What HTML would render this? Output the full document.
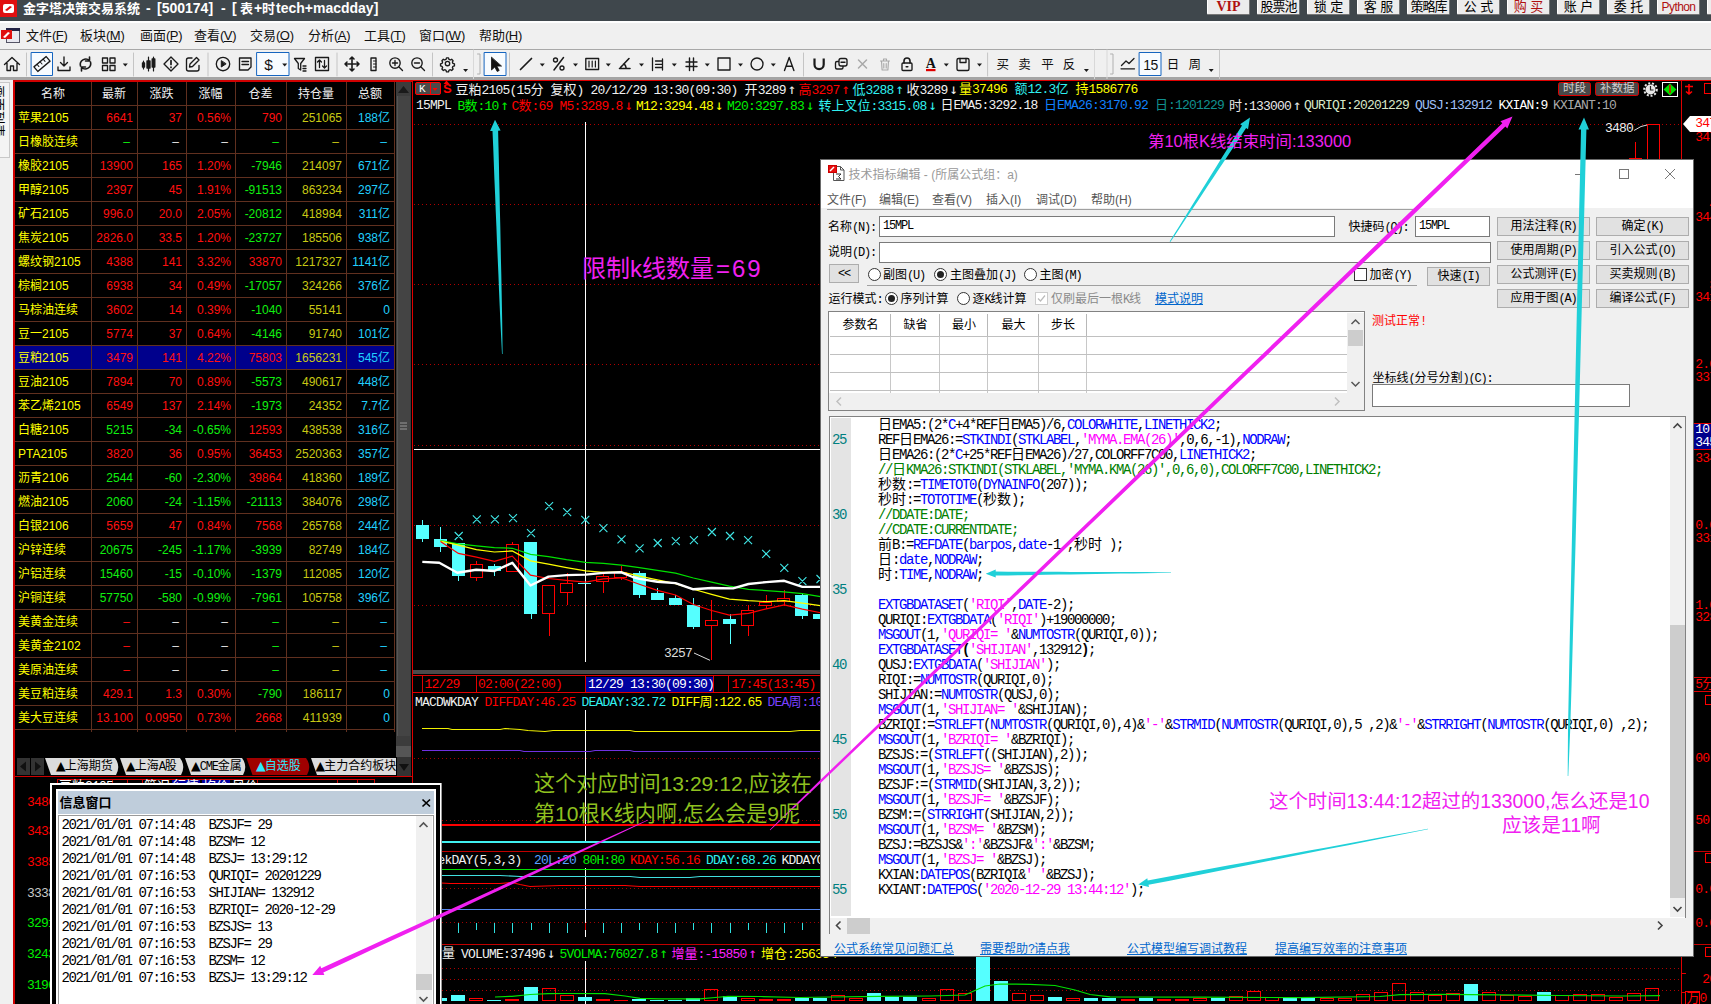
<!DOCTYPE html>
<html lang="zh-CN"><head><meta charset="utf-8"><title>金字塔决策交易系统</title>
<style>
*{margin:0;padding:0;box-sizing:border-box}
html,body{width:1711px;height:1004px;overflow:hidden;background:#000}
body{font-family:"Liberation Sans","Noto Sans CJK SC",sans-serif;font-size:12px;color:#000}
#root{position:relative;width:1711px;height:1004px;overflow:hidden;background:#000}
.a{position:absolute}
.m{font-family:"Liberation Mono","Noto Sans CJK SC",monospace;font-size:14px;letter-spacing:-1.4px;white-space:pre}
.m i,.s i{font-style:normal;letter-spacing:0}
.s{font-family:"Liberation Mono","Noto Sans CJK SC",monospace;font-size:12px;letter-spacing:-1.2px;white-space:pre}
.y{font-family:"Liberation Sans","Noto Sans CJK SC",sans-serif}
i{font-style:normal}
.h{font-family:"Liberation Mono","Noto Sans CJK SC",monospace;font-size:13px;letter-spacing:-.8px;white-space:pre;line-height:16px;height:16px}
.h i{letter-spacing:0}
.h .w{display:inline-block;width:12px;text-align:center;font-family:"DejaVu Sans Mono","DejaVu Sans",monospace;font-size:14px;line-height:14px}
#dlg{background:#f0f0f0;border:1px solid #6a6a6a;overflow:hidden}
.tt{font-family:"Liberation Mono","Noto Sans CJK SC",monospace;font-size:12px;letter-spacing:-1.2px;white-space:pre;line-height:18px}.tt i{letter-spacing:0}.tr{font-family:"DejaVu Sans",sans-serif;font-weight:normal;font-size:12.5px;letter-spacing:-1px;line-height:10px}
/* top */
#title{left:0;top:0;width:1711px;height:21px;background:#3f474c}
#title .t{left:23px;top:0;line-height:17px;color:#fff;font-weight:bold;font-size:13px;white-space:pre}
#title .l{font-size:14px}
.tb{top:0;height:15px;width:43px;background:#ececec;border:1px solid #fff;border-top:0;border-right-color:#777;border-bottom-color:#777;border-radius:0 0 2px 2px;text-align:center;line-height:14px;font-size:13px;white-space:pre;font-family:"Liberation Sans","Noto Sans CJK SC",sans-serif;color:#000;overflow:hidden}
#menu{left:0;top:21px;width:1711px;height:28px;background:#f0f0f0;border-top:2px solid #fff}
#menu span{position:absolute;top:-1px;line-height:28px;font-size:13px;color:#111;white-space:pre}
#menu u{letter-spacing:0}#menu b{font-weight:normal;letter-spacing:-.7px}
#tool{left:0;top:49px;width:1711px;height:31px;background:#f0f0f0;border-top:1px solid #a8a8a8;border-bottom:3px solid #a4a4a4}
/* table */
#tbl{left:13px;top:80px;width:400px;height:925px;background:#000}
.r{position:absolute;left:2px;width:380px;height:24px;border-bottom:1px solid #60301f;line-height:25px;font-size:12px}
.r span{position:absolute;top:0;height:23px;text-align:right;white-space:pre}
.r .n{left:3px;text-align:left;color:#ff0}
.R{color:#ff1010}.G{color:#10f010}.W{color:#e8e8e8}.Y{color:#c8c814}.C{color:#20d0ff}
.vl{position:absolute;top:2px;width:1px;height:650px;background:#60301f}
</style></head><body><div id="root">
<div class="a" id="title"><svg class="a" style="left:0;top:0" width="17" height="17"><rect width="17" height="17" fill="#e01010"/><rect x="3" y="4" width="11" height="9" rx="2" fill="#fff"/><path d="M5 10l5-4 2 1-5 4z" fill="#e01010"/></svg><div class="a t">金字塔决策交易系统</div><div class="a t l" style="left:146px">-</div><div class="a t l" style="left:157px">[500174]</div><div class="a t l" style="left:221px">-</div><div class="a t l" style="left:232px">[</div><div class="a t" style="left:240px">表</div><div class="a t l" style="left:254px">+</div><div class="a t" style="left:262px">时</div><div class="a t l" style="left:276px">tech+macdday]</div>
<div class="a tb" style="left:1207px;color:#b01010;font-weight:bold;font-size:14px;font-family:Liberation Serif,serif">VIP</div>
<div class="a tb" style="left:1257px;color:#000;letter-spacing:-1px">股票池</div>
<div class="a tb" style="left:1307px;color:#000;">锁 定</div>
<div class="a tb" style="left:1357px;color:#000;">客 服</div>
<div class="a tb" style="left:1407px;color:#000;letter-spacing:-1px">策略库</div>
<div class="a tb" style="left:1457px;color:#000;">公 式</div>
<div class="a tb" style="left:1507px;color:#b01010;">购 买</div>
<div class="a tb" style="left:1557px;color:#000;">账 户</div>
<div class="a tb" style="left:1607px;color:#000;">委 托</div>
<div class="a tb" style="left:1657px;color:#b01010;font-family:Liberation Sans,sans-serif;letter-spacing:-.6px;font-size:12px">Python</div>
<div class="a tb" style="left:1707px;color:#000;"></div>
</div>
<div class="a" id="menu">
<svg class="a" style="left:1px;top:4px" width="19" height="17"><rect x="5.5" y="1.5" width="13" height="14" fill="#e8e8f0" stroke="#556"/><rect x="5" y="1" width="14" height="3" fill="#224"/><rect x="0" y="3" width="11" height="9" fill="#e01010"/><path d="M2 10l5-5 2 1-5 5z" fill="#fff"/></svg>
<span style="left:26px">文件<b>(<u>F</u>)</b></span>
<span style="left:80px">板块<b>(<u>M</u>)</b></span>
<span style="left:140px">画面<b>(<u>P</u>)</b></span>
<span style="left:194px">查看<b>(<u>V</u>)</b></span>
<span style="left:250px">交易<b>(<u>O</u>)</b></span>
<span style="left:308px">分析<b>(<u>A</u>)</b></span>
<span style="left:364px">工具<b>(<u>T</u>)</b></span>
<span style="left:419px">窗口<b>(<u>W</u>)</b></span>
<span style="left:479px">帮助<b>(<u>H</u>)</b></span>
</div>
<div class="a" id="tool"><svg class="a" style="left:0;top:-1px" width="1711" height="30" viewBox="0 0 1711 30" fill="none" stroke="#1a1a1a" stroke-width="1.35" stroke-linecap="round" stroke-linejoin="round"><path d="M4.5 15.5L12 8.5l7.5 7M7 14v7.5h3.5v-4.5h3v4.5H17V14"/><path d="M26.5 4v23" stroke="#c4c4c4" stroke-width="1"/><rect x="31.5" y="3.5" width="21.0" height="23" fill="#f7fbff" stroke="#1565c0" stroke-width="1"/><g transform="rotate(-40 42 15)"><rect x="34" y="12" width="16" height="6"/><path d="M38 12v3M42 12v3M46 12v3" stroke-width="1"/></g><path d="M64 8v9M60.5 13.5L64 17l3.5-3.5M58 18v3.5h12V18"/><path d="M80.5 17a5.5 5.5 0 0 1 9-5.5M90.5 13a5.5 5.5 0 0 1-9 5.5M89.5 8v4h-4M81.500 22v-4h4" stroke-width="1.6"/><rect x="102.5" y="9.0" width="5" height="5"/><rect x="102.5" y="16.5" width="5" height="5"/><rect x="110.0" y="9.0" width="5" height="5"/><rect x="110.0" y="16.5" width="5" height="5"/><path d="M122.8 14.5h5l-2.5 3z" fill="#1a1a1a" stroke="none"/><path d="M133.5 4v23" stroke="#c4c4c4" stroke-width="1"/><path d="M143.5 12v8M148.5 8v14M153.5 8v14" stroke-width="1.2"/><rect x="142.500" y="14" width="2" height="4" fill="#1a1a1a"/><rect x="147" y="12" width="3" height="7" fill="#1a1a1a"/><rect x="152.2" y="10" width="2.600" height="8" fill="#1a1a1a"/><path d="M171 8l7 7-7 7-7-7z"/><path d="M171 11.500v4M171 18v.4" stroke-width="1.7"/><path d="M192 9h-3.500a2 2 0 0 0-2 2v9a2 2 0 0 0 2 2h8.500a2 2 0 0 0 2-2v-3.500"/><path d="M196.500 8.500l2.500 2.500-6.500 6.500-3 .5.500-3z"/><path d="M208.0 4v23" stroke="#c4c4c4" stroke-width="1"/><circle cx="223" cy="15" r="6.7"/><path d="M221.300 12v6l4.500-3z" fill="#1a1a1a" stroke-width="1"/><path d="M239.500 9h11.500v9l-3 3h-8.500zM242 12.500h6.500M242 15.500h6.500"/><rect x="257.0" y="3.5" width="32.0" height="23" fill="#f7fbff" stroke="#1565c0" stroke-width="1"/><text x="268.500" y="21" font-family="Liberation Sans,sans-serif" font-size="15.5" fill="#111" stroke="none" text-anchor="middle">$</text><path d="M282.2 14.5h5l-2.5 3z" fill="#1a1a1a" stroke="none"/><path d="M294.500 9.500h10l-3.800 5v6.500l-2.400-1.500v-5zM303 17h3M303 19.500h3M303 22h3" stroke-width="1.300"/><rect x="315.500" y="8.500" width="13" height="13"/><path d="M319.500 18.500v-7M317.500 13l2-2 2 2M324.500 11.500v7M322.500 17l2 2 2-2" stroke-width="1.300"/><path d="M337.0 4v23" stroke="#c4c4c4" stroke-width="1"/><path d="M352 8v14M345 15h14M350 10l2-2 2 2M350 20l2 2 2-2M347 13l-2 2 2 2M357 13l2 2-2 2" stroke-width="1.600"/><rect x="371" y="9" width="5" height="12.500"/><path d="M373.500 12h2.500M373.500 15h2.500M373.500 18h2.500" stroke-width="1"/><circle cx="395" cy="14" r="5.200"/><path d="M399 18l3.500 3.500M392.500 14h5M395 11.500v5"/><circle cx="417" cy="14" r="5.200"/><path d="M421 18l3.500 3.500M414.500 14h5"/><path d="M432.5 4v23" stroke="#c4c4c4" stroke-width="1"/><circle cx="447.500" cy="14.500" r="2.200"/><path d="M446.200 8h2.600l.5 1.800 1.700.8 1.700-.9 1.800 1.800-.9 1.700.7 1.700 1.900.5v2.600l-1.900.5-.7 1.700.9 1.700-1.800 1.800-1.700-.9-1.700.7-.5 1.900h-2.600l-.5-1.900-1.700-.7-1.700.9-1.800-1.800.9-1.700-.8-1.700-1.800-.5v-2.600l1.800-.5.8-1.700-.9-1.700 1.800-1.800 1.700.9 1.700-.8z" transform="translate(447.500 14.500) scale(.8) translate(-447.500 -15)" stroke-width="1.700"/><path d="M463.1 20.0h5l-2.5 3z" fill="#1a1a1a" stroke="none"/><path d="M473.500 1v29" stroke="#d8d8d8" stroke-width="1"/><path d="M477.500 5h2.500v20h-2.500" stroke="#b0b0b0" stroke-width="1" /><rect x="484.5" y="3.5" width="21.5" height="23" fill="#f7fbff" stroke="#1565c0" stroke-width="1"/><path d="M491.500 8.500v12.500l3.300-3 2.400 4.500 2-1-2.300-4.400h4.300z" fill="#111" stroke="#111" stroke-width=".8"/><path d="M509.5 4v23" stroke="#c4c4c4" stroke-width="1"/><path d="M520.500 20.500l11-11" stroke-width="1.700"/><path d="M539.8 14.5h5l-2.5 3z" fill="#1a1a1a" stroke="none"/><path d="M554 21l9.500-12.500" stroke-width="1.500"/><circle cx="555.500" cy="11" r="2"/><circle cx="562" cy="19" r="2"/><path d="M573.0 14.5h5l-2.5 3z" fill="#1a1a1a" stroke="none"/><rect x="585.800" y="9.500" width="12.800" height="11"/><path d="M589 12v6M592.200 12v6M595.400 12v6" stroke-width="1.200"/><path d="M605.8 14.5h5l-2.5 3z" fill="#1a1a1a" stroke="none"/><path d="M619.500 19.500h10.500M620.500 18.500l8.500-9M623.500 15a4 4 0 0 1 2.500 3.500" stroke-width="1.600"/><path d="M639.0 14.5h5l-2.5 3z" fill="#1a1a1a" stroke="none"/><path d="M652.500 9v12.500M655.500 12h7M655.500 15.300h7M655.500 18.500h7M662.500 10v11" stroke-width="1.300"/><path d="M671.8 14.5h5l-2.5 3z" fill="#1a1a1a" stroke="none"/><path d="M689.500 9v12.500M693.500 9v12.500M686 13h11M686 17.500h11" stroke-width="1.400"/><path d="M704.8 14.5h5l-2.5 3z" fill="#1a1a1a" stroke="none"/><rect x="718" y="9" width="12" height="12"/><path d="M738.0 14.5h5l-2.5 3z" fill="#1a1a1a" stroke="none"/><circle cx="757" cy="15" r="6"/><path d="M770.8 14.5h5l-2.5 3z" fill="#1a1a1a" stroke="none"/><path d="M784.500 21.500l4.700-13 4.700 13M786.200 17.300h6" stroke-width="1.400"/><path d="M803.5 4v23" stroke="#c4c4c4" stroke-width="1"/><path d="M814.500 9.500v6a4.600 4.600 0 0 0 9.200 0v-6" stroke-width="2.200" stroke-linecap="butt"/><rect x="835.500" y="12.500" width="7.500" height="7.500" rx="1.500"/><rect x="839" y="9.500" width="8" height="7.500" rx="2" fill="#f0f0f0"/><path d="M841 13.200h4"/><path d="M858.500 11l8 8M866.500 11l-8 8" stroke="#a8a8a8" stroke-width="1.500"/><path d="M880.500 12h9M883.500 12v-2h3v2M881.500 12l.6 9h5.800l.6-9M883.800 14.500v4.500M886.200 14.500v4.500" stroke="#a8a8a8" stroke-width="1.100"/><rect x="902" y="14" width="10" height="7.500" rx="1"/><path d="M904 14v-2a3 3 0 0 1 6 0v2M906.200 17.800h1.600" stroke-width="1.600"/><text x="930.700" y="19" font-family="Liberation Serif,serif" font-weight="bold" font-size="14" fill="#111" stroke="none" text-anchor="middle">A</text><rect x="926" y="20" width="9.500" height="2.200" fill="#e00000" stroke="none"/><path d="M943.8 14.5h5l-2.5 3z" fill="#1a1a1a" stroke="none"/><rect x="957" y="9.500" width="12" height="12" rx="1.500"/><path d="M960 9.500v4h6v-4"/><path d="M977.0 14.5h5l-2.5 3z" fill="#1a1a1a" stroke="none"/><path d="M987.6 4v23" stroke="#c4c4c4" stroke-width="1"/><text x="1002.7" y="19.500" font-family="Liberation Sans,Noto Sans CJK SC,sans-serif" font-size="12.500" fill="#111" stroke="none" text-anchor="middle">买</text><text x="1024.5" y="19.500" font-family="Liberation Sans,Noto Sans CJK SC,sans-serif" font-size="12.500" fill="#111" stroke="none" text-anchor="middle">卖</text><text x="1047.4" y="19.500" font-family="Liberation Sans,Noto Sans CJK SC,sans-serif" font-size="12.500" fill="#111" stroke="none" text-anchor="middle">平</text><text x="1069.0" y="19.500" font-family="Liberation Sans,Noto Sans CJK SC,sans-serif" font-size="12.500" fill="#111" stroke="none" text-anchor="middle">反</text><path d="M1083.9 20.0h5l-2.5 3z" fill="#1a1a1a" stroke="none"/><path d="M1094.500 1v29M1107 1v29" stroke="#d8d8d8" stroke-width="1"/><path d="M1110.500 5h2.500v20h-2.500" stroke="#b0b0b0" stroke-width="1"/><path d="M1121 19.800h13.500M1121.500 16.500l4.500-4.500 3 2.500 5-5" stroke-width="1.300"/><rect x="1139.5" y="3.5" width="21.5" height="23" fill="#f7fbff" stroke="#1565c0" stroke-width="1"/><text x="1150.500" y="20.500" font-family="Liberation Sans,sans-serif" font-size="14" fill="#111" stroke="none" text-anchor="middle" letter-spacing="-.5">15</text><text x="1173.0" y="19.500" font-family="Liberation Sans,Noto Sans CJK SC,sans-serif" font-size="12.500" fill="#111" stroke="none" text-anchor="middle">日</text><text x="1194.7" y="19.500" font-family="Liberation Sans,Noto Sans CJK SC,sans-serif" font-size="12.500" fill="#111" stroke="none" text-anchor="middle">周</text><path d="M1208.7 20.0h5l-2.5 3z" fill="#1a1a1a" stroke="none"/><path d="M1219.500 1v29" stroke="#c8c8c8" stroke-width="1"/></svg></div>
<div class="a" style="left:0;top:80px;width:14px;height:924px;background:#f0f0f0"></div>
<div class="a" style="left:0;top:82px;width:10px;height:76px;background:#f4f4f4;border:1px solid #c8c8c8;border-left:0;overflow:hidden"><div class="a" style="left:-9px;top:2px;width:14px;font-size:13px;line-height:13px;color:#000;transform:rotate(90deg);transform-origin:7px 7px;white-space:pre;">画面列表</div></div>
<div class="a" id="tbl">
<div class="a" style="left:0;top:0;width:400px;height:2px;background:#d00000"></div>
<div class="a" style="left:0;top:0;width:2px;height:925px;background:#d00000"></div>
<div class="r" style="top:2px;color:#f0f0f0">
<span style="left:0px;width:76px;text-align:center;font-size:12px">名称</span>
<span style="left:76px;width:46px;text-align:center;font-size:12px">最新</span>
<span style="left:122px;width:49px;text-align:center;font-size:12px">涨跌</span>
<span style="left:171px;width:49px;text-align:center;font-size:12px">涨幅</span>
<span style="left:220px;width:51px;text-align:center;font-size:12px">仓差</span>
<span style="left:271px;width:60px;text-align:center;font-size:12px">持仓量</span>
<span style="left:331px;width:48px;text-align:center;font-size:12px">总额</span>
</div>
<div class="r" style="top:26px;">
<span class="n">苹果2105</span>
<span class="R" style="left:76px;width:46px;padding-right:4px">6641</span>
<span class="R" style="left:122px;width:49px;padding-right:4px">37</span>
<span class="R" style="left:171px;width:49px;padding-right:4px">0.56%</span>
<span class="R" style="left:220px;width:51px;padding-right:4px">790</span>
<span class="Y" style="left:271px;width:60px;padding-right:4px">251065</span>
<span class="C" style="left:331px;width:48px;padding-right:4px">188亿</span>
</div>
<div class="r" style="top:50px;">
<span class="n">日橡胶连续</span>
<span class="G" style="left:76px;width:46px;padding-right:7px">–</span>
<span class="W" style="left:122px;width:49px;padding-right:7px">–</span>
<span class="W" style="left:171px;width:49px;padding-right:7px">–</span>
<span class="G" style="left:220px;width:51px;padding-right:7px">–</span>
<span class="Y" style="left:271px;width:60px;padding-right:7px">–</span>
<span class="C" style="left:331px;width:48px;padding-right:7px">–</span>
</div>
<div class="r" style="top:74px;">
<span class="n">橡胶2105</span>
<span class="R" style="left:76px;width:46px;padding-right:4px">13900</span>
<span class="R" style="left:122px;width:49px;padding-right:4px">165</span>
<span class="R" style="left:171px;width:49px;padding-right:4px">1.20%</span>
<span class="G" style="left:220px;width:51px;padding-right:4px">-7946</span>
<span class="Y" style="left:271px;width:60px;padding-right:4px">214097</span>
<span class="C" style="left:331px;width:48px;padding-right:4px">671亿</span>
</div>
<div class="r" style="top:98px;">
<span class="n">甲醇2105</span>
<span class="R" style="left:76px;width:46px;padding-right:4px">2397</span>
<span class="R" style="left:122px;width:49px;padding-right:4px">45</span>
<span class="R" style="left:171px;width:49px;padding-right:4px">1.91%</span>
<span class="G" style="left:220px;width:51px;padding-right:4px">-91513</span>
<span class="Y" style="left:271px;width:60px;padding-right:4px">863234</span>
<span class="C" style="left:331px;width:48px;padding-right:4px">297亿</span>
</div>
<div class="r" style="top:122px;">
<span class="n">矿石2105</span>
<span class="R" style="left:76px;width:46px;padding-right:4px">996.0</span>
<span class="R" style="left:122px;width:49px;padding-right:4px">20.0</span>
<span class="R" style="left:171px;width:49px;padding-right:4px">2.05%</span>
<span class="G" style="left:220px;width:51px;padding-right:4px">-20812</span>
<span class="Y" style="left:271px;width:60px;padding-right:4px">418984</span>
<span class="C" style="left:331px;width:48px;padding-right:4px">311亿</span>
</div>
<div class="r" style="top:146px;">
<span class="n">焦炭2105</span>
<span class="R" style="left:76px;width:46px;padding-right:4px">2826.0</span>
<span class="R" style="left:122px;width:49px;padding-right:4px">33.5</span>
<span class="R" style="left:171px;width:49px;padding-right:4px">1.20%</span>
<span class="G" style="left:220px;width:51px;padding-right:4px">-23727</span>
<span class="Y" style="left:271px;width:60px;padding-right:4px">185506</span>
<span class="C" style="left:331px;width:48px;padding-right:4px">938亿</span>
</div>
<div class="r" style="top:170px;">
<span class="n">螺纹钢2105</span>
<span class="R" style="left:76px;width:46px;padding-right:4px">4388</span>
<span class="R" style="left:122px;width:49px;padding-right:4px">141</span>
<span class="R" style="left:171px;width:49px;padding-right:4px">3.32%</span>
<span class="R" style="left:220px;width:51px;padding-right:4px">33870</span>
<span class="Y" style="left:271px;width:60px;padding-right:4px">1217327</span>
<span class="C" style="left:331px;width:48px;padding-right:4px">1141亿</span>
</div>
<div class="r" style="top:194px;">
<span class="n">棕榈2105</span>
<span class="R" style="left:76px;width:46px;padding-right:4px">6938</span>
<span class="R" style="left:122px;width:49px;padding-right:4px">34</span>
<span class="R" style="left:171px;width:49px;padding-right:4px">0.49%</span>
<span class="G" style="left:220px;width:51px;padding-right:4px">-17057</span>
<span class="Y" style="left:271px;width:60px;padding-right:4px">324266</span>
<span class="C" style="left:331px;width:48px;padding-right:4px">376亿</span>
</div>
<div class="r" style="top:218px;">
<span class="n">马棕油连续</span>
<span class="R" style="left:76px;width:46px;padding-right:4px">3602</span>
<span class="R" style="left:122px;width:49px;padding-right:4px">14</span>
<span class="R" style="left:171px;width:49px;padding-right:4px">0.39%</span>
<span class="G" style="left:220px;width:51px;padding-right:4px">-1040</span>
<span class="Y" style="left:271px;width:60px;padding-right:4px">55141</span>
<span class="C" style="left:331px;width:48px;padding-right:4px">0</span>
</div>
<div class="r" style="top:242px;">
<span class="n">豆一2105</span>
<span class="R" style="left:76px;width:46px;padding-right:4px">5774</span>
<span class="R" style="left:122px;width:49px;padding-right:4px">37</span>
<span class="R" style="left:171px;width:49px;padding-right:4px">0.64%</span>
<span class="G" style="left:220px;width:51px;padding-right:4px">-4146</span>
<span class="Y" style="left:271px;width:60px;padding-right:4px">91740</span>
<span class="C" style="left:331px;width:48px;padding-right:4px">101亿</span>
</div>
<div class="r" style="top:266px; background:#00008c;">
<span class="n">豆粕2105</span>
<span class="R" style="left:76px;width:46px;padding-right:4px">3479</span>
<span class="R" style="left:122px;width:49px;padding-right:4px">141</span>
<span class="R" style="left:171px;width:49px;padding-right:4px">4.22%</span>
<span class="R" style="left:220px;width:51px;padding-right:4px">75803</span>
<span class="Y" style="left:271px;width:60px;padding-right:4px">1656231</span>
<span class="C" style="left:331px;width:48px;padding-right:4px">545亿</span>
</div>
<div class="r" style="top:290px;">
<span class="n">豆油2105</span>
<span class="R" style="left:76px;width:46px;padding-right:4px">7894</span>
<span class="R" style="left:122px;width:49px;padding-right:4px">70</span>
<span class="R" style="left:171px;width:49px;padding-right:4px">0.89%</span>
<span class="G" style="left:220px;width:51px;padding-right:4px">-5573</span>
<span class="Y" style="left:271px;width:60px;padding-right:4px">490617</span>
<span class="C" style="left:331px;width:48px;padding-right:4px">448亿</span>
</div>
<div class="r" style="top:314px;">
<span class="n">苯乙烯2105</span>
<span class="R" style="left:76px;width:46px;padding-right:4px">6549</span>
<span class="R" style="left:122px;width:49px;padding-right:4px">137</span>
<span class="R" style="left:171px;width:49px;padding-right:4px">2.14%</span>
<span class="G" style="left:220px;width:51px;padding-right:4px">-1973</span>
<span class="Y" style="left:271px;width:60px;padding-right:4px">24352</span>
<span class="C" style="left:331px;width:48px;padding-right:4px">7.7亿</span>
</div>
<div class="r" style="top:338px;">
<span class="n">白糖2105</span>
<span class="G" style="left:76px;width:46px;padding-right:4px">5215</span>
<span class="G" style="left:122px;width:49px;padding-right:4px">-34</span>
<span class="G" style="left:171px;width:49px;padding-right:4px">-0.65%</span>
<span class="R" style="left:220px;width:51px;padding-right:4px">12593</span>
<span class="Y" style="left:271px;width:60px;padding-right:4px">438538</span>
<span class="C" style="left:331px;width:48px;padding-right:4px">316亿</span>
</div>
<div class="r" style="top:362px;">
<span class="n">PTA2105</span>
<span class="R" style="left:76px;width:46px;padding-right:4px">3820</span>
<span class="R" style="left:122px;width:49px;padding-right:4px">36</span>
<span class="R" style="left:171px;width:49px;padding-right:4px">0.95%</span>
<span class="R" style="left:220px;width:51px;padding-right:4px">36453</span>
<span class="Y" style="left:271px;width:60px;padding-right:4px">2520363</span>
<span class="C" style="left:331px;width:48px;padding-right:4px">357亿</span>
</div>
<div class="r" style="top:386px;">
<span class="n">沥青2106</span>
<span class="G" style="left:76px;width:46px;padding-right:4px">2544</span>
<span class="G" style="left:122px;width:49px;padding-right:4px">-60</span>
<span class="G" style="left:171px;width:49px;padding-right:4px">-2.30%</span>
<span class="R" style="left:220px;width:51px;padding-right:4px">39864</span>
<span class="Y" style="left:271px;width:60px;padding-right:4px">418360</span>
<span class="C" style="left:331px;width:48px;padding-right:4px">189亿</span>
</div>
<div class="r" style="top:410px;">
<span class="n">燃油2105</span>
<span class="G" style="left:76px;width:46px;padding-right:4px">2060</span>
<span class="G" style="left:122px;width:49px;padding-right:4px">-24</span>
<span class="G" style="left:171px;width:49px;padding-right:4px">-1.15%</span>
<span class="G" style="left:220px;width:51px;padding-right:4px">-21113</span>
<span class="Y" style="left:271px;width:60px;padding-right:4px">384076</span>
<span class="C" style="left:331px;width:48px;padding-right:4px">298亿</span>
</div>
<div class="r" style="top:434px;">
<span class="n">白银2106</span>
<span class="R" style="left:76px;width:46px;padding-right:4px">5659</span>
<span class="R" style="left:122px;width:49px;padding-right:4px">47</span>
<span class="R" style="left:171px;width:49px;padding-right:4px">0.84%</span>
<span class="R" style="left:220px;width:51px;padding-right:4px">7568</span>
<span class="Y" style="left:271px;width:60px;padding-right:4px">265768</span>
<span class="C" style="left:331px;width:48px;padding-right:4px">244亿</span>
</div>
<div class="r" style="top:458px;">
<span class="n">沪锌连续</span>
<span class="G" style="left:76px;width:46px;padding-right:4px">20675</span>
<span class="G" style="left:122px;width:49px;padding-right:4px">-245</span>
<span class="G" style="left:171px;width:49px;padding-right:4px">-1.17%</span>
<span class="G" style="left:220px;width:51px;padding-right:4px">-3939</span>
<span class="Y" style="left:271px;width:60px;padding-right:4px">82749</span>
<span class="C" style="left:331px;width:48px;padding-right:4px">184亿</span>
</div>
<div class="r" style="top:482px;">
<span class="n">沪铝连续</span>
<span class="G" style="left:76px;width:46px;padding-right:4px">15460</span>
<span class="G" style="left:122px;width:49px;padding-right:4px">-15</span>
<span class="G" style="left:171px;width:49px;padding-right:4px">-0.10%</span>
<span class="G" style="left:220px;width:51px;padding-right:4px">-1379</span>
<span class="Y" style="left:271px;width:60px;padding-right:4px">112085</span>
<span class="C" style="left:331px;width:48px;padding-right:4px">120亿</span>
</div>
<div class="r" style="top:506px;">
<span class="n">沪铜连续</span>
<span class="G" style="left:76px;width:46px;padding-right:4px">57750</span>
<span class="G" style="left:122px;width:49px;padding-right:4px">-580</span>
<span class="G" style="left:171px;width:49px;padding-right:4px">-0.99%</span>
<span class="G" style="left:220px;width:51px;padding-right:4px">-7961</span>
<span class="Y" style="left:271px;width:60px;padding-right:4px">105758</span>
<span class="C" style="left:331px;width:48px;padding-right:4px">396亿</span>
</div>
<div class="r" style="top:530px;">
<span class="n">美黄金连续</span>
<span class="R" style="left:76px;width:46px;padding-right:7px">–</span>
<span class="W" style="left:122px;width:49px;padding-right:7px">–</span>
<span class="W" style="left:171px;width:49px;padding-right:7px">–</span>
<span class="G" style="left:220px;width:51px;padding-right:7px">–</span>
<span class="Y" style="left:271px;width:60px;padding-right:7px">–</span>
<span class="C" style="left:331px;width:48px;padding-right:7px">–</span>
</div>
<div class="r" style="top:554px;">
<span class="n">美黄金2102</span>
<span class="R" style="left:76px;width:46px;padding-right:7px">–</span>
<span class="W" style="left:122px;width:49px;padding-right:7px">–</span>
<span class="W" style="left:171px;width:49px;padding-right:7px">–</span>
<span class="G" style="left:220px;width:51px;padding-right:7px">–</span>
<span class="Y" style="left:271px;width:60px;padding-right:7px">–</span>
<span class="C" style="left:331px;width:48px;padding-right:7px">–</span>
</div>
<div class="r" style="top:578px;">
<span class="n">美原油连续</span>
<span class="R" style="left:76px;width:46px;padding-right:7px">–</span>
<span class="W" style="left:122px;width:49px;padding-right:7px">–</span>
<span class="W" style="left:171px;width:49px;padding-right:7px">–</span>
<span class="G" style="left:220px;width:51px;padding-right:7px">–</span>
<span class="Y" style="left:271px;width:60px;padding-right:7px">–</span>
<span class="C" style="left:331px;width:48px;padding-right:7px">–</span>
</div>
<div class="r" style="top:602px;">
<span class="n">美豆粕连续</span>
<span class="R" style="left:76px;width:46px;padding-right:4px">429.1</span>
<span class="R" style="left:122px;width:49px;padding-right:4px">1.3</span>
<span class="R" style="left:171px;width:49px;padding-right:4px">0.30%</span>
<span class="G" style="left:220px;width:51px;padding-right:4px">-790</span>
<span class="Y" style="left:271px;width:60px;padding-right:4px">186117</span>
<span class="C" style="left:331px;width:48px;padding-right:4px">0</span>
</div>
<div class="r" style="top:626px;">
<span class="n">美大豆连续</span>
<span class="R" style="left:76px;width:46px;padding-right:4px">13.100</span>
<span class="R" style="left:122px;width:49px;padding-right:4px">0.0950</span>
<span class="R" style="left:171px;width:49px;padding-right:4px">0.73%</span>
<span class="R" style="left:220px;width:51px;padding-right:4px">2668</span>
<span class="Y" style="left:271px;width:60px;padding-right:4px">411939</span>
<span class="C" style="left:331px;width:48px;padding-right:4px">0</span>
</div>
<div class="vl" style="left:78px"></div>
<div class="vl" style="left:124px"></div>
<div class="vl" style="left:173px"></div>
<div class="vl" style="left:222px"></div>
<div class="vl" style="left:273px"></div>
<div class="vl" style="left:333px"></div>
<div class="vl" style="left:381px"></div>
</div>
<svg class="a" style="left:0;top:0" width="1711" height="1004" viewBox="0 0 1711 1004">
<g shape-rendering="crispEdges">
<rect x="412" y="80" width="1" height="924" fill="#e00000"/><rect x="413" y="80" width="1298" height="1" fill="#e00000"/>
<rect x="1681" y="80" width="1" height="924" fill="#e00000"/>
<path d="M414 124.5H1681" stroke="#b00000" stroke-dasharray="1 3"/>
<path d="M414 204.5H1681" stroke="#b00000" stroke-dasharray="1 3"/>
<path d="M414 284.5H1681" stroke="#b00000" stroke-dasharray="1 3"/>
<path d="M414 364.5H1681" stroke="#b00000" stroke-dasharray="1 3"/>
<path d="M414 445.5H1681" stroke="#b00000" stroke-dasharray="1 3"/>
<path d="M414 525.5H1681" stroke="#b00000" stroke-dasharray="1 3"/>
<path d="M414 605.5H1681" stroke="#b00000" stroke-dasharray="1 3"/>
<path d="M414 758.5H1681" stroke="#a00000" stroke-dasharray="1 3"/>
<path d="M414 820.5H1681" stroke="#a00000" stroke-dasharray="1 3"/>
<path d="M414 888.5H1681" stroke="#a00000" stroke-dasharray="1 3"/>
<path d="M414 922.5H1681" stroke="#a00000" stroke-dasharray="1 3"/>
<path d="M414 968.5H1681" stroke="#b00000" stroke-dasharray="1 3"/>
<path d="M414 979.5H1681" stroke="#b00000" stroke-dasharray="1 3"/>
<path d="M414 990.5H1681" stroke="#b00000" stroke-dasharray="1 3"/>
<rect x="585" y="122" width="1" height="540" fill="#fff"/><rect x="414" y="449" width="1267" height="1" fill="#fff"/>
<rect x="585" y="710" width="1" height="133" fill="#fff"/><rect x="585" y="868" width="1" height="69" fill="#fff"/><rect x="585" y="961" width="1" height="43" fill="#fff"/>
<rect x="413" y="670" width="1268" height="4" fill="#4a4a4a"/>
<rect x="413" y="675" width="1268" height="1" fill="#e00000"/><rect x="413" y="692" width="1268" height="1" fill="#e00000"/>
<rect x="422" y="676" width="1" height="16" fill="#e00000"/>
<rect x="476" y="676" width="1" height="16" fill="#e00000"/>
<rect x="585" y="676" width="1" height="16" fill="#e00000"/>
<rect x="713" y="676" width="1" height="16" fill="#e00000"/>
<rect x="728" y="676" width="1" height="16" fill="#e00000"/>
<rect x="586" y="677" width="127" height="15" fill="#0000a0"/>
<rect x="413" y="851" width="1268" height="1" fill="#c00000"/><rect x="413" y="944" width="1268" height="1" fill="#c00000"/>
<rect x="414" y="824" width="1267" height="2" fill="#ff0000"/><rect x="414" y="841" width="1267" height="2" fill="#40f0f0"/>
<rect x="414" y="869" width="1267" height="1" fill="#00e000"/><rect x="414" y="909" width="1267" height="1" fill="#5588ee"/>
<rect x="422" y="923" width="1" height="7" fill="#30e0e0"/>
<rect x="440" y="923" width="1" height="10" fill="#30e0e0"/>
<rect x="458" y="923" width="1" height="10" fill="#30e0e0"/>
<rect x="476" y="923" width="1" height="7" fill="#30e0e0"/>
<rect x="494" y="923" width="1" height="10" fill="#30e0e0"/>
<rect x="512" y="923" width="1" height="10" fill="#30e0e0"/>
<rect x="531" y="923" width="1" height="7" fill="#30e0e0"/>
<rect x="549" y="923" width="1" height="10" fill="#30e0e0"/>
<rect x="567" y="923" width="1" height="10" fill="#30e0e0"/>
<rect x="585" y="923" width="1" height="7" fill="#d00000"/>
<rect x="603" y="923" width="1" height="10" fill="#30e0e0"/>
<rect x="621" y="923" width="1" height="10" fill="#30e0e0"/>
<rect x="639" y="923" width="1" height="7" fill="#30e0e0"/>
<rect x="657" y="923" width="1" height="10" fill="#30e0e0"/>
<rect x="675" y="923" width="1" height="10" fill="#30e0e0"/>
<rect x="693" y="923" width="1" height="7" fill="#30e0e0"/>
<rect x="711" y="923" width="1" height="10" fill="#30e0e0"/>
<rect x="730" y="923" width="1" height="10" fill="#30e0e0"/>
<rect x="748" y="923" width="1" height="7" fill="#30e0e0"/>
<rect x="766" y="923" width="1" height="10" fill="#30e0e0"/>
<rect x="784" y="923" width="1" height="10" fill="#30e0e0"/>
<rect x="802" y="923" width="1" height="7" fill="#30e0e0"/>
<rect x="820" y="923" width="1" height="10" fill="#30e0e0"/>
<rect x="838" y="923" width="1" height="10" fill="#30e0e0"/>
<rect x="856" y="923" width="1" height="7" fill="#30e0e0"/>
<rect x="874" y="923" width="1" height="10" fill="#30e0e0"/>
<rect x="892" y="923" width="1" height="10" fill="#30e0e0"/>
<rect x="910" y="923" width="1" height="7" fill="#30e0e0"/>
<rect x="929" y="923" width="1" height="10" fill="#30e0e0"/>
<rect x="947" y="923" width="1" height="10" fill="#30e0e0"/>
<rect x="965" y="923" width="1" height="7" fill="#30e0e0"/>
<rect x="983" y="923" width="1" height="10" fill="#30e0e0"/>
<rect x="1001" y="923" width="1" height="10" fill="#30e0e0"/>
<rect x="1019" y="923" width="1" height="7" fill="#30e0e0"/>
<rect x="1037" y="923" width="1" height="10" fill="#30e0e0"/>
<rect x="1055" y="923" width="1" height="10" fill="#30e0e0"/>
<rect x="1073" y="923" width="1" height="7" fill="#30e0e0"/>
<rect x="1091" y="923" width="1" height="10" fill="#30e0e0"/>
<rect x="1109" y="923" width="1" height="10" fill="#30e0e0"/>
<rect x="1128" y="923" width="1" height="7" fill="#30e0e0"/>
<rect x="1146" y="923" width="1" height="10" fill="#30e0e0"/>
<rect x="1164" y="923" width="1" height="10" fill="#30e0e0"/>
<rect x="1182" y="923" width="1" height="7" fill="#30e0e0"/>
<rect x="1200" y="923" width="1" height="10" fill="#30e0e0"/>
<rect x="1218" y="923" width="1" height="10" fill="#30e0e0"/>
<rect x="1236" y="923" width="1" height="7" fill="#30e0e0"/>
<rect x="1254" y="923" width="1" height="10" fill="#30e0e0"/>
<rect x="1272" y="923" width="1" height="10" fill="#30e0e0"/>
<rect x="1290" y="923" width="1" height="7" fill="#30e0e0"/>
<rect x="1308" y="923" width="1" height="10" fill="#30e0e0"/>
<rect x="1327" y="923" width="1" height="10" fill="#30e0e0"/>
<rect x="1345" y="923" width="1" height="7" fill="#30e0e0"/>
<rect x="1363" y="923" width="1" height="10" fill="#30e0e0"/>
<rect x="1381" y="923" width="1" height="10" fill="#30e0e0"/>
<rect x="1399" y="923" width="1" height="7" fill="#30e0e0"/>
<rect x="1417" y="923" width="1" height="10" fill="#30e0e0"/>
<rect x="1435" y="923" width="1" height="10" fill="#30e0e0"/>
<rect x="1453" y="923" width="1" height="7" fill="#30e0e0"/>
<rect x="1471" y="923" width="1" height="10" fill="#30e0e0"/>
<rect x="1489" y="923" width="1" height="10" fill="#30e0e0"/>
<rect x="1507" y="923" width="1" height="7" fill="#30e0e0"/>
<rect x="1525" y="923" width="1" height="10" fill="#30e0e0"/>
<rect x="1544" y="923" width="1" height="10" fill="#30e0e0"/>
<rect x="1562" y="923" width="1" height="7" fill="#30e0e0"/>
<rect x="1580" y="923" width="1" height="10" fill="#30e0e0"/>
<rect x="1598" y="923" width="1" height="10" fill="#30e0e0"/>
<rect x="1616" y="923" width="1" height="7" fill="#30e0e0"/>
<rect x="1634" y="923" width="1" height="10" fill="#30e0e0"/>
<rect x="1652" y="923" width="1" height="10" fill="#30e0e0"/>
<rect x="1670" y="923" width="1" height="7" fill="#30e0e0"/>
<rect x="416" y="525" width="13" height="14" fill="#55ffff"/>
<rect x="422" y="520" width="1" height="22" fill="#55ffff"/>
<rect x="434" y="539" width="13" height="8" fill="#55ffff"/>
<rect x="440" y="527" width="1" height="25" fill="#55ffff"/>
<rect x="452" y="543" width="13" height="33" fill="#55ffff"/>
<rect x="458" y="543" width="1" height="38" fill="#55ffff"/>
<rect x="476" y="561" width="1" height="3" fill="#ff0000"/>
<rect x="476" y="578" width="1" height="3" fill="#ff0000"/>
<rect x="470.5" y="564.5" width="12" height="13" fill="none" stroke="#ff0000"/>
<rect x="488" y="566" width="13" height="5" fill="#55ffff"/>
<rect x="494" y="564" width="1" height="12" fill="#55ffff"/>
<rect x="512" y="542" width="1" height="2" fill="#ff0000"/>
<rect x="512" y="572" width="1" height="0" fill="#ff0000"/>
<rect x="506.5" y="544.5" width="12" height="27" fill="none" stroke="#ff0000"/>
<rect x="524" y="542" width="13" height="72" fill="#55ffff"/>
<rect x="531" y="542" width="1" height="77" fill="#55ffff"/>
<rect x="549" y="585" width="1" height="0" fill="#ff0000"/>
<rect x="549" y="614" width="1" height="22" fill="#ff0000"/>
<rect x="542.5" y="585.5" width="12" height="28" fill="none" stroke="#ff0000"/>
<rect x="567" y="573" width="1" height="10" fill="#ff0000"/>
<rect x="567" y="593" width="1" height="12" fill="#ff0000"/>
<rect x="560.5" y="583.5" width="12" height="9" fill="none" stroke="#ff0000"/>
<rect x="578" y="583" width="13" height="1" fill="#55ffff"/>
<rect x="585" y="583" width="1" height="1" fill="#55ffff"/>
<rect x="603" y="573" width="1" height="3" fill="#ff0000"/>
<rect x="603" y="582" width="1" height="11" fill="#ff0000"/>
<rect x="596.5" y="576.5" width="12" height="5" fill="none" stroke="#ff0000"/>
<rect x="621" y="566" width="1" height="6" fill="#ff0000"/>
<rect x="621" y="578" width="1" height="2" fill="#ff0000"/>
<rect x="614.5" y="572.5" width="12" height="5" fill="none" stroke="#ff0000"/>
<rect x="633" y="573" width="13" height="22" fill="#55ffff"/>
<rect x="639" y="571" width="1" height="27" fill="#55ffff"/>
<rect x="651" y="593" width="13" height="7" fill="#55ffff"/>
<rect x="657" y="588" width="1" height="12" fill="#55ffff"/>
<rect x="669" y="598" width="13" height="7" fill="#55ffff"/>
<rect x="675" y="595" width="1" height="10" fill="#55ffff"/>
<rect x="687" y="605" width="13" height="22" fill="#55ffff"/>
<rect x="693" y="598" width="1" height="31" fill="#55ffff"/>
<rect x="711" y="600" width="1" height="20" fill="#ff0000"/>
<rect x="711" y="626" width="1" height="34" fill="#ff0000"/>
<rect x="705.5" y="620.5" width="12" height="5" fill="none" stroke="#ff0000"/>
<rect x="723" y="619" width="13" height="5" fill="#55ffff"/>
<rect x="730" y="614" width="1" height="30" fill="#55ffff"/>
<rect x="748" y="605" width="1" height="5" fill="#ff0000"/>
<rect x="748" y="626" width="1" height="10" fill="#ff0000"/>
<rect x="741.5" y="610.5" width="12" height="15" fill="none" stroke="#ff0000"/>
<rect x="766" y="595" width="1" height="7" fill="#ff0000"/>
<rect x="766" y="606" width="1" height="3" fill="#ff0000"/>
<rect x="759.5" y="602.5" width="12" height="3" fill="none" stroke="#ff0000"/>
<rect x="784" y="590" width="1" height="8" fill="#ff0000"/>
<rect x="784" y="602" width="1" height="4" fill="#ff0000"/>
<rect x="777.5" y="598.5" width="12" height="3" fill="none" stroke="#ff0000"/>
<rect x="795" y="595" width="13" height="21" fill="#55ffff"/>
<rect x="802" y="593" width="1" height="26" fill="#55ffff"/>
<rect x="813" y="614" width="13" height="5" fill="#55ffff"/>
<rect x="820" y="614" width="1" height="6" fill="#55ffff"/>
<rect x="1647.5" y="124.5" width="12" height="40" fill="none" stroke="#ff0000"/><rect x="1635" y="142" width="1" height="17" fill="#ff0000"/><rect x="1629" y="158" width="13" height="1" fill="#ff0000"/>
<rect x="433" y="998" width="14" height="3" fill="#55ffff"/>
<rect x="451" y="995" width="14" height="6" fill="#55ffff"/>
<rect x="469.5" y="998.5" width="13" height="2" fill="none" stroke="#ff0000"/>
<rect x="487" y="1000" width="14" height="1" fill="#55ffff"/>
<rect x="505" y="999" width="14" height="2" fill="#ff0000"/>
<rect x="524" y="987" width="14" height="14" fill="#55ffff"/>
<rect x="542.5" y="988.5" width="13" height="12" fill="none" stroke="#ff0000"/>
<rect x="560.5" y="995.5" width="13" height="5" fill="none" stroke="#ff0000"/>
<rect x="578" y="997" width="14" height="4" fill="#55ffff"/>
<rect x="596" y="999" width="14" height="2" fill="#ff0000"/>
<rect x="614" y="1000" width="14" height="1" fill="#ff0000"/>
<rect x="632" y="999" width="14" height="2" fill="#55ffff"/>
<rect x="650" y="1000" width="14" height="1" fill="#55ffff"/>
<rect x="668" y="1000" width="14" height="1" fill="#55ffff"/>
<rect x="686" y="998" width="14" height="3" fill="#55ffff"/>
<rect x="704.5" y="989.5" width="13" height="11" fill="none" stroke="#ff0000"/>
<rect x="723" y="996" width="14" height="5" fill="#55ffff"/>
<rect x="741.5" y="998.5" width="13" height="2" fill="none" stroke="#ff0000"/>
<rect x="759" y="999" width="14" height="2" fill="#ff0000"/>
<rect x="777" y="999" width="14" height="2" fill="#ff0000"/>
<rect x="795" y="998" width="14" height="3" fill="#55ffff"/>
<rect x="813" y="998" width="14" height="3" fill="#55ffff"/>
<rect x="831.5" y="995.5" width="13" height="5" fill="none" stroke="#ff0000"/>
<rect x="849.5" y="998.5" width="13" height="2" fill="none" stroke="#ff0000"/>
<rect x="867" y="993" width="14" height="8" fill="#55ffff"/>
<rect x="885" y="997" width="14" height="4" fill="#55ffff"/>
<rect x="903" y="997" width="14" height="4" fill="#55ffff"/>
<rect x="922.5" y="998.5" width="13" height="2" fill="none" stroke="#ff0000"/>
<rect x="940.5" y="989.5" width="13" height="11" fill="none" stroke="#ff0000"/>
<rect x="958.5" y="993.5" width="13" height="7" fill="none" stroke="#ff0000"/>
<rect x="976" y="940" width="14" height="61" fill="#55ffff"/>
<rect x="994" y="981" width="14" height="20" fill="#55ffff"/>
<rect x="1012.5" y="993.5" width="13" height="7" fill="none" stroke="#ff0000"/>
<rect x="1030.5" y="995.5" width="13" height="5" fill="none" stroke="#ff0000"/>
<rect x="1048" y="997" width="14" height="4" fill="#55ffff"/>
<rect x="1066.5" y="998.5" width="13" height="2" fill="none" stroke="#ff0000"/>
<rect x="1084" y="998" width="14" height="3" fill="#55ffff"/>
<rect x="1102" y="998" width="14" height="3" fill="#55ffff"/>
<rect x="1121" y="999" width="14" height="2" fill="#ff0000"/>
<rect x="1139" y="998" width="14" height="3" fill="#55ffff"/>
<rect x="1157" y="999" width="14" height="2" fill="#ff0000"/>
<rect x="1175" y="999" width="14" height="2" fill="#ff0000"/>
<rect x="1193.5" y="998.5" width="13" height="2" fill="none" stroke="#ff0000"/>
<rect x="1211" y="998" width="14" height="3" fill="#55ffff"/>
<rect x="1229.5" y="996.5" width="13" height="4" fill="none" stroke="#ff0000"/>
<rect x="1247.5" y="991.5" width="13" height="9" fill="none" stroke="#ff0000"/>
<rect x="1265.5" y="997.5" width="13" height="3" fill="none" stroke="#ff0000"/>
<rect x="1283" y="998" width="14" height="3" fill="#55ffff"/>
<rect x="1301" y="998" width="14" height="3" fill="#55ffff"/>
<rect x="1320.5" y="998.5" width="13" height="2" fill="none" stroke="#ff0000"/>
<rect x="1338.5" y="998.5" width="13" height="2" fill="none" stroke="#ff0000"/>
<rect x="1356.5" y="994.5" width="13" height="6" fill="none" stroke="#ff0000"/>
<rect x="1374.5" y="992.5" width="13" height="8" fill="none" stroke="#ff0000"/>
<rect x="1392.5" y="983.5" width="13" height="17" fill="none" stroke="#ff0000"/>
<rect x="1410.5" y="992.5" width="13" height="8" fill="none" stroke="#ff0000"/>
<rect x="1428.5" y="995.5" width="13" height="5" fill="none" stroke="#ff0000"/>
<rect x="1446.5" y="993.5" width="13" height="7" fill="none" stroke="#ff0000"/>
<rect x="1464" y="984" width="14" height="17" fill="#55ffff"/>
<rect x="1482.5" y="992.5" width="13" height="8" fill="none" stroke="#ff0000"/>
<rect x="1500.5" y="995.5" width="13" height="5" fill="none" stroke="#ff0000"/>
<rect x="1518.5" y="996.5" width="13" height="4" fill="none" stroke="#ff0000"/>
<rect x="1537" y="992" width="14" height="9" fill="#55ffff"/>
<rect x="1555.5" y="995.5" width="13" height="5" fill="none" stroke="#ff0000"/>
<rect x="1573.5" y="994.5" width="13" height="6" fill="none" stroke="#ff0000"/>
<rect x="1591.5" y="994.5" width="13" height="6" fill="none" stroke="#ff0000"/>
<rect x="1609.5" y="997.5" width="13" height="3" fill="none" stroke="#ff0000"/>
<rect x="1627.5" y="993.5" width="13" height="7" fill="none" stroke="#ff0000"/>
<rect x="1645.5" y="988.5" width="13" height="12" fill="none" stroke="#ff0000"/>
</g>
<path d="M454.7 532.0l8 8m0-8l-8 8M472.8 515.3l8 8m0-8l-8 8M490.9 515.3l8 8m0-8l-8 8M509.0 514.2l8 8m0-8l-8 8M527.0 529.1l8 8m0-8l-8 8M545.1 502.1l8 8m0-8l-8 8M563.2 508.1l8 8m0-8l-8 8M581.3 515.9l8 8m0-8l-8 8M599.4 524.2l8 8m0-8l-8 8M617.5 535.4l8 8m0-8l-8 8M635.6 544.3l8 8m0-8l-8 8M653.7 539.0l8 8m0-8l-8 8M671.8 537.1l8 8m0-8l-8 8M689.9 536.1l8 8m0-8l-8 8M707.9 528.0l8 8m0-8l-8 8M726.0 532.0l8 8m0-8l-8 8M744.1 536.1l8 8m0-8l-8 8M762.2 549.9l8 8m0-8l-8 8M780.3 563.9l8 8m0-8l-8 8M798.4 577.2l8 8m0-8l-8 8M816.5 575.0l8 8m0-8l-8 8" stroke="#40e8e8" stroke-width="1.1" fill="none"/>
<polyline points="440.5,540.7 458.4,543.9 476.4,545.8 494.4,547.7 512.3,548.3 530.5,554.3 548.5,556.6 566.5,559.6 585.6,562.3 603.5,563.4 621.4,565.1 639.3,567.6 657.3,570.4 675.5,573.2 693.4,578.0 711.6,582.1 729.4,586.1 748.5,589.3 766.3,590.6 784.2,591.8 802.4,593.7 822.0,596.8" fill="none" stroke="#00e000" stroke-width="1.2"/>
<polyline points="440.5,541.1 458.4,545.2 476.4,549.6 494.4,552.0 512.3,550.9 530.5,560.9 548.5,564.2 566.5,567.6 585.6,570.8 603.5,572.3 621.4,571.8 639.3,576.1 657.3,579.9 675.5,583.6 693.4,589.3 711.6,594.4 729.4,599.2 748.5,600.7 766.3,601.6 784.2,600.7 802.4,603.1 822.0,605.8" fill="none" stroke="#ffff00" stroke-width="1.2"/>
<polyline points="440.5,541.5 458.4,553.4 476.4,557.2 494.4,561.3 512.3,556.2 530.5,575.1 548.5,578.5 566.5,580.4 585.6,582.1 603.5,578.9 621.4,577.8 639.3,584.2 657.3,590.3 675.5,595.0 693.4,604.5 711.6,610.5 729.4,615.2 748.5,613.3 766.3,608.8 784.2,604.8 802.4,609.2 822.0,613.0" fill="none" stroke="#ff0000" stroke-width="1.2"/>
<polyline points="422.3,561.9 439.3,562.8 457.3,572.7 476.2,569.8 494.4,571.0 512.3,562.8 530.5,585.5 548.5,576.6 566.5,575.1 585.6,574.6 603.5,572.9 621.4,572.3 632.7,577.0 639.3,578.9 657.3,581.8 675.5,583.1 693.4,589.3 711.6,588.0 733.0,588.4 748.5,584.0 766.3,582.1 784.2,580.8 802.4,586.9 822.0,586.9" fill="none" stroke="#ffffff" stroke-width="2.4" stroke-linejoin="round"/>
<polyline points="422,728.5 448,728.5 452,729.5 500,729.5 505,728.5 520,729.5 528,730.5 545,731.5 553,730.5 630,730.5 635,731.5 790,731.5 800,730.5 1681,730.5" fill="none" stroke="#f0f000" stroke-width="1.1"/>
<polyline points="422,750.5 520,750.5 524,751.5 590,751.5 595,750.5 630,750.5 634,751.5 1681,751.5" fill="none" stroke="#7030e0" stroke-width="1.2"/>
<polyline points="414,875.5 500,875.5 520,876.5 630,876.5 640,877.5 690,877.5 700,876.5 1681,876.5" fill="none" stroke="#40e0e0" stroke-width="1.1"/>
<polyline points="414,881.5 450,883.5 500,883.5 512,882.5 520,884.5 530,886.5 560,885.5 625,885.5 640,886.5 1681,886.5" fill="none" stroke="#ff0000" stroke-width="1.2"/>
<polyline points="495.0,997.0 512.0,996.3 530.0,994.5 548.0,993.7 566.0,993.5 605.0,993.7 625.0,996.0 640.0,998.3 660.0,998.8 700.0,998.9 715.0,997.5 728.0,996.3 760.0,996.5 800.0,997.5 830.0,997.0 880.0,996.4 930.0,996.0 965.0,995.0 985.0,986.0 1000.0,984.0 1030.0,984.3 1055.0,985.5 1075.0,990.0 1090.0,994.5 1110.0,996.8 1200.0,997.2 1300.0,997.6 1380.0,996.5 1400.0,994.6 1440.0,994.4 1500.0,994.8 1560.0,995.5 1620.0,996.0 1660.0,995.6" fill="none" stroke="#00e000" stroke-width="1.2"/>
<path d="M694 653l16 7.300M1634 130.500l7-4 6-1.500" stroke="#ddd" stroke-width="1" fill="none"/>
<g><rect x="1558.5" y="82.500" width="32" height="13" rx="2" fill="#484848" stroke="#e00000"/><rect x="1595.500" y="82.500" width="43" height="13" rx="2" fill="#484848" stroke="#e00000"/>
<circle cx="1650.500" cy="89.500" r="5" fill="#e8e8e8"/><circle cx="1650.500" cy="89.500" r="6.300" fill="none" stroke="#e8e8e8" stroke-width="2" stroke-dasharray="2 1.800"/><path d="M1650.500 86v4h3" stroke="#222" stroke-width="1.200" fill="none"/>
<rect x="1662.500" y="82.500" width="15" height="14" fill="#000" stroke="#fff"/><path d="M1670 83.500l6.500 6-6.500 6-6.500-6z" fill="#00e000"/><path d="M1670 85v8" stroke="#e00000" stroke-width="1.500"/>
<path d="M1685 86.500h8M1689 84v9M1686 91.500l3 2.500 3-2.500" stroke="#ff0000" stroke-width="1.600" fill="none"/><rect x="1704.500" y="83.500" width="9" height="10" fill="none" stroke="#ff0000"/></g>
<rect x="415.500" y="82.500" width="25" height="12" rx="1.500" fill="#4a4a4a" stroke="#ff0000"/><path d="M430.500 83v11" stroke="#ff0000"/><path d="M432.500 88h5l-2.500 3z" fill="#ff0000"/>
<path d="M446.500 80.500l3 3.500h-6z" fill="#ff0000"/>
</svg>
<div class="a h" style="left:419px;top:81px;color:#fff;font-size:11px">K</div>
<div class="a" style="left:443px;top:82px;color:#ff0000;font:bold 13px Liberation Sans,sans-serif;line-height:14px">S</div>
<div class="a h" style="left:455.5px;top:81.5px;color:#f0f0f0;"><i>豆粕</i>2105(15<i>分</i> <i>复权</i>) 20/12/29 13:30(09:30) <i>开</i>3289<i class="w">↑</i></div>
<div class="a h" style="left:798.5px;top:81.5px;color:#ff0000;"><i>高</i>3297<i class="w">↑</i></div>
<div class="a h" style="left:852.5px;top:81.5px;color:#30f0f0;"><i>低</i>3288<i class="w">↑</i></div>
<div class="a h" style="left:906.5px;top:81.5px;color:#f0f0f0;"><i>收</i>3289<i class="w">↓</i></div>
<div class="a h" style="left:959.0px;top:81.5px;color:#ffff00;"><i>量</i>37496</div>
<div class="a h" style="left:1014.5px;top:81.5px;color:#30f0f0;"><i>额</i>12.3<i>亿</i></div>
<div class="a h" style="left:1075.5px;top:81.5px;color:#ffff00;"><i>持</i>1586776</div>
<div class="a h" style="left:416.0px;top:97.5px;color:#f0f0f0;">15MPL</div>
<div class="a h" style="left:457.5px;top:97.5px;color:#00f000;">B<i>数</i>:10<i class="w">↑</i></div>
<div class="a h" style="left:511.5px;top:97.5px;color:#ff0000;">C<i>数</i>:69 M5:3289.8<i class="w">↓</i></div>
<div class="a h" style="left:636.0px;top:97.5px;color:#ffff00;">M12:3294.48<i class="w">↓</i></div>
<div class="a h" style="left:727.0px;top:97.5px;color:#00f000;">M20:3297.83<i class="w">↓</i></div>
<div class="a h" style="left:818.5px;top:97.5px;color:#30f0f0;"><i>转上叉位</i>:3315.08<i class="w">↓</i></div>
<div class="a h" style="left:940.5px;top:97.5px;color:#f0f0f0;"><i>日</i>EMA5:3292.18</div>
<div class="a h" style="left:1044.0px;top:97.5px;color:#1080ff;"><i>日</i>EMA26:3170.92</div>
<div class="a h" style="left:1155.0px;top:97.5px;color:#109090;"><i>日</i>:1201229</div>
<div class="a h" style="left:1229.0px;top:97.5px;color:#e8e8e8;"><i>时</i>:133000<i class="w">↑</i></div>
<div class="a h" style="left:1304.0px;top:97.5px;color:#d8e8c8;">QURIQI:20201229</div>
<div class="a h" style="left:1415.0px;top:97.5px;color:#a0c0f8;">QUSJ:132912</div>
<div class="a h" style="left:1498.5px;top:97.5px;color:#ffffff;">KXIAN:9</div>
<div class="a h" style="left:1553.0px;top:97.5px;color:#a8a8a8;">KXIANT:10</div>
<div class="a h" style="left:1563.0px;top:81.0px;color:#d0d0d0;font-size:11.5px"><i>时段</i></div>
<div class="a h" style="left:1600.0px;top:81.0px;color:#d0d0d0;font-size:11.5px"><i>补数据</i></div>
<div class="a h" style="left:424.5px;top:676.5px;color:#ff0000;">12/29</div>
<div class="a h" style="left:478.0px;top:676.5px;color:#ff0000;">02:00(22:00)</div>
<div class="a h" style="left:588.0px;top:676.5px;color:#fff;">12/29 13:30(09:30)</div>
<div class="a h" style="left:731.5px;top:676.5px;color:#ff0000;">17:45(13:45)</div>
<div class="a h" style="left:415.0px;top:694.5px;color:#f0f0f0;">MACDWKDAY</div>
<div class="a h" style="left:484.5px;top:694.5px;color:#ff0000;">DIFFDAY:46.25</div>
<div class="a h" style="left:581.5px;top:694.5px;color:#30f0f0;">DEADAY:32.72</div>
<div class="a h" style="left:671.5px;top:694.5px;color:#ffff00;">DIFF<i>周</i>:122.65</div>
<div class="a h" style="left:767.5px;top:694.5px;color:#7a40ff;">DEA<i>周</i>:102.81</div>
<div class="a h" style="left:409.5px;top:852.5px;color:#f0f0f0;">KDWeekDAY(5,3,3)</div>
<div class="a h" style="left:534.0px;top:852.5px;color:#5aa0ff;">20L:20</div>
<div class="a h" style="left:582.5px;top:852.5px;color:#00f000;">80H:80</div>
<div class="a h" style="left:630.0px;top:852.5px;color:#ff0000;">KDAY:56.16</div>
<div class="a h" style="left:706.0px;top:852.5px;color:#30f0f0;">DDAY:68.26</div>
<div class="a h" style="left:781.5px;top:852.5px;color:#f0f0f0;">KDDAYC:1</div>
<div class="a h" style="left:416.0px;top:945.5px;color:#f0f0f0;"><i>成交量</i></div>
<div class="a h" style="left:461.0px;top:945.5px;color:#f0f0f0;">VOLUME:37496<i class="w">↓</i></div>
<div class="a h" style="left:559.5px;top:945.5px;color:#00f000;">5VOLMA:76027.8<i class="w">↑</i></div>
<div class="a h" style="left:671.5px;top:945.5px;color:#ff20ff;"><i>增量</i>:-15850<i class="w">↑</i></div>
<div class="a h" style="left:761.0px;top:945.5px;color:#ffff00;"><i>增仓</i>:25633<i class="w">↑</i></div>
<div class="a h" style="left:664.0px;top:645.8px;color:#ddd;">3257</div>
<div class="a h" style="left:1605.0px;top:120.5px;color:#eee;">3480</div>
<div class="a" style="left:1683px;top:116px;width:28px;height:16px;overflow:hidden"><svg width="28" height="16"><path d="M0 8l7-8h21v16h-21z" fill="#fff"/></svg></div>
<div class="a h" style="left:1695.3px;top:115.8px;color:#ff0000;">3479</div>
<div class="a h" style="left:1695.3px;top:130.0px;color:#ff0000;">3470</div>
<div class="a h" style="left:1695.3px;top:197.0px;color:#ff0000;">  4.0</div>
<div class="a h" style="left:1695.3px;top:209.5px;color:#ff0000;">3449</div>
<div class="a h" style="left:1695.3px;top:277.5px;color:#ff0000;">  3.0</div>
<div class="a h" style="left:1695.3px;top:290.0px;color:#ff0000;">3417</div>
<div class="a h" style="left:1695.3px;top:356.5px;color:#ff0000;">2.0</div>
<div class="a h" style="left:1695.3px;top:369.5px;color:#ff0000;">3377</div>
<div class="a h" style="left:1695.3px;top:451.0px;color:#ff0000;">3345</div>
<div class="a h" style="left:1695.3px;top:518.0px;color:#ff0000;">0.0</div>
<div class="a h" style="left:1695.3px;top:530.5px;color:#ff0000;">3312</div>
<div class="a h" style="left:1695.3px;top:597.6px;color:#ff0000;">1.0</div>
<div class="a h" style="left:1695.3px;top:610.3px;color:#ff0000;">3280</div>
<div class="a h" style="left:1695.3px;top:751.3px;color:#ff0000;">00.00</div>
<div class="a h" style="left:1695.3px;top:813.0px;color:#ff0000;">50.00</div>
<div class="a h" style="left:1695.3px;top:882.2px;color:#ff0000;">0.00</div>
<div class="a h" style="left:1695.3px;top:915.8px;color:#ff0000;">0.00</div>
<div class="a h" style="left:1695.3px;top:972.3px;color:#ff0000;"> 20.0</div>
<div class="a" style="left:1694px;top:423px;width:17px;height:27px;background:#00008c;border-top:1px solid #e00000;border-bottom:1px solid #e00000"></div>
<div class="a h" style="left:1695.3px;top:421.6px;color:#fff;">10:3</div>
<div class="a h" style="left:1695.3px;top:434.9px;color:#fff;">3453</div>
<div class="a" style="left:1693px;top:677px;width:20px;height:15px;border:1px solid #e00000"></div>
<div class="a h" style="left:1695.3px;top:676.8px;color:#ff0000;">5<i>分</i></div>
<div class="a" style="left:1705px;top:695px;width:10px;height:10px;border:1px solid #ff0000"></div>
<div class="a" style="left:1705px;top:853px;width:10px;height:10px;border:1px solid #ff0000"></div>
<div class="a" style="left:1693px;top:851px;width:18px;height:1px;background:#c00000"></div>
<div class="a" style="left:1705px;top:947px;width:10px;height:10px;border:1px solid #ff0000"></div>
<div class="a" style="left:1693px;top:944px;width:18px;height:1px;background:#c00000"></div>
<div class="a" style="left:1685px;top:991px;width:15px;height:15px;border:1px solid #ff0000"></div>
<div class="a h" style="left:1686.5px;top:990.5px;color:#ff0000;"><i>万</i>0</div>
<svg class="a" style="left:1681px;top:958px" width="6" height="46"><path d="M0 15.500h5M0 34.500h5" stroke="#e00000"/></svg>
<div class="a" id="dlg" style="left:820px;top:159px;width:874px;height:798px">
<div class="a" style="left:0;top:0;width:872px;height:48px;background:#fff"></div>
<svg class="a" style="left:7.0px;top:5.0px" width="18" height="17"><path d="M5.500 1.500h7l3.500 3.500v10.500h-10.500z" fill="#fff" stroke="#555"/><path d="M12.500 1.500v3.500h3.500" fill="none" stroke="#555"/><path d="M8 9h5l-2.500 2.500 2.500 2.500h-5" fill="none" stroke="#333" stroke-width="1"/><rect x=".5" y=".5" width="8" height="7" fill="#e81010" stroke="#c00"/><path d="M2 6l4-4" stroke="#fff" stroke-width="1.500"/></svg>
<div class="a y" style="left:27.5px;top:6.5px;font-size:12px;line-height:16px;color:#999;white-space:pre">技术指标编辑 - (所属公式组：a)</div>
<svg class="a" style="left:754.0px;top:9.0px" width="110" height="14" fill="none" stroke="#777" stroke-width="1"><path d="M0 5.500h9"/><rect x="44.500" y=".5" width="9" height="9"/><path d="M90 0l10 10M100 0l-10 10"/></svg>
<div class="a y" style="left:6.0px;top:32.0px;font-size:12px;line-height:16px;color:#555;white-space:pre">文件(F)</div>
<div class="a y" style="left:58.0px;top:32.0px;font-size:12px;line-height:16px;color:#555;white-space:pre">编辑(E)</div>
<div class="a y" style="left:111.0px;top:32.0px;font-size:12px;line-height:16px;color:#555;white-space:pre">查看(V)</div>
<div class="a y" style="left:165.0px;top:32.0px;font-size:12px;line-height:16px;color:#555;white-space:pre">插入(I)</div>
<div class="a y" style="left:215.0px;top:32.0px;font-size:12px;line-height:16px;color:#555;white-space:pre">调试(D)</div>
<div class="a y" style="left:270.0px;top:32.0px;font-size:12px;line-height:16px;color:#555;white-space:pre">帮助(H)</div>
<div class="a" style="left:6.0px;top:49.0px;width:590px;height:1px;background:#a0a0a0"></div>
<div class="a s" style="left:7.0px;top:61.0px;line-height:14px;color:#000;"><i>名称</i>(N):</div>
<div class="a" style="left:58.0px;top:56.0px;width:456px;height:21px;background:#fff;border:1px solid #7a7a7a"><span class="a s" style="left:3px;top:3px;line-height:12px">15MPL</span></div>
<div class="a s" style="left:527.5px;top:61.0px;line-height:14px;color:#000;"><i>快捷码</i>(Q):</div>
<div class="a" style="left:594.0px;top:56.0px;width:75px;height:21px;background:#fff;border:1px solid #7a7a7a"><span class="a s" style="left:3px;top:3px;line-height:12px">15MPL</span></div>
<div class="a s" style="left:7.0px;top:86.0px;line-height:14px;color:#000;"><i>说明</i>(D):</div>
<div class="a" style="left:58.0px;top:82.0px;width:612px;height:21px;background:#fff;border:1px solid #7a7a7a"><span class="a s" style="left:3px;top:3px;line-height:12px"></span></div>
<div class="a s" style="left:8.0px;top:104.0px;width:30px;height:19px;background:#e1e1e1;border:1px solid #adadad;text-align:center;line-height:19px">&lt;&lt;</div>
<div class="a" style="left:47.0px;top:108.0px;width:13px;height:13px;border:1px solid #333;border-radius:50%;background:#fff"></div>
<div class="a s" style="left:62.0px;top:109.0px;line-height:14px;color:#000;"><i>副图</i>(U)</div>
<div class="a" style="left:112.5px;top:108.0px;width:13px;height:13px;border:1px solid #333;border-radius:50%;background:#fff"><div class="a" style="left:2px;top:2px;width:7px;height:7px;border-radius:50%;background:#222"></div></div>
<div class="a s" style="left:129.0px;top:109.0px;line-height:14px;color:#000;"><i>主图叠加</i>(J)</div>
<div class="a" style="left:202.5px;top:108.0px;width:13px;height:13px;border:1px solid #333;border-radius:50%;background:#fff"></div>
<div class="a s" style="left:218.5px;top:109.0px;line-height:14px;color:#000;"><i>主图</i>(M)</div>
<div class="a" style="left:532.5px;top:108.0px;width:13px;height:13px;border:1px solid #333;background:#fff"></div>
<div class="a s" style="left:548.5px;top:109.0px;line-height:14px;color:#000;"><i>加密</i>(Y)</div>
<div class="a s" style="left:606.0px;top:107.0px;width:63px;height:19px;background:#e1e1e1;border:1px solid #adadad;text-align:center;line-height:19px"><i>快速</i>(I)</div>
<div class="a" style="left:46.0px;top:125.0px;width:550px;height:1px;background:#a0a0a0"></div>
<div class="a s" style="left:7.5px;top:132.5px;line-height:14px;color:#000;"><i>运行模式</i>:</div>
<div class="a" style="left:64.0px;top:131.5px;width:13px;height:13px;border:1px solid #333;border-radius:50%;background:#fff"><div class="a" style="left:2px;top:2px;width:7px;height:7px;border-radius:50%;background:#222"></div></div>
<div class="a s" style="left:79.5px;top:132.5px;line-height:14px;color:#000;"><i>序列计算</i></div>
<div class="a" style="left:135.5px;top:131.5px;width:13px;height:13px;border:1px solid #333;border-radius:50%;background:#fff"></div>
<div class="a s" style="left:151.5px;top:132.5px;line-height:14px;color:#000;"><i>逐</i>K<i>线计算</i></div>
<div class="a" style="left:214.0px;top:131.5px;width:13px;height:13px;border:1px solid #ccc;background:#fff"><svg width="11" height="11"><path d="M2 5.500l2.500 2.500 4.500-5.500" stroke="#bbb" fill="none" stroke-width="1.200"/></svg></div>
<div class="a s" style="left:230.0px;top:132.5px;line-height:14px;color:#8a8a8a;"><i>仅刷最后一根</i>K<i>线</i></div>
<div class="a s" style="left:334.0px;top:132.5px;line-height:14px;color:#0066cc;text-decoration:underline"><i>模式说明</i></div>
<div class="a s" style="left:676.0px;top:57.0px;width:93px;height:19px;background:#e1e1e1;border:1px solid #adadad;text-align:center;line-height:19px"><i>用法注释</i>(R)</div>
<div class="a s" style="left:775.0px;top:57.0px;width:93px;height:19px;background:#e1e1e1;border:1px solid #adadad;text-align:center;line-height:19px"><i>确定</i>(K)</div>
<div class="a s" style="left:676.0px;top:81.0px;width:93px;height:19px;background:#e1e1e1;border:1px solid #adadad;text-align:center;line-height:19px"><i>使用周期</i>(P)</div>
<div class="a s" style="left:775.0px;top:81.0px;width:93px;height:19px;background:#e1e1e1;border:1px solid #adadad;text-align:center;line-height:19px"><i>引入公式</i>(O)</div>
<div class="a s" style="left:676.0px;top:105.0px;width:93px;height:19px;background:#e1e1e1;border:1px solid #adadad;text-align:center;line-height:19px"><i>公式测评</i>(E)</div>
<div class="a s" style="left:775.0px;top:105.0px;width:93px;height:19px;background:#e1e1e1;border:1px solid #adadad;text-align:center;line-height:19px"><i>买卖规则</i>(B)</div>
<div class="a s" style="left:676.0px;top:129.0px;width:93px;height:19px;background:#e1e1e1;border:1px solid #adadad;text-align:center;line-height:19px"><i>应用于图</i>(A)</div>
<div class="a s" style="left:775.0px;top:129.0px;width:93px;height:19px;background:#e1e1e1;border:1px solid #adadad;text-align:center;line-height:19px"><i>编译公式</i>(F)</div>
<div class="a s" style="left:551.0px;top:154.5px;line-height:14px;color:#ff0000;"><i>测试正常</i>!</div>
<div class="a s" style="left:551.5px;top:212.0px;line-height:14px;color:#000;"><i>坐标线</i>(<i>分号分割</i>)(C):</div>
<div class="a" style="left:551.0px;top:224.0px;width:258px;height:23px;background:#fff;border:1px solid #7a7a7a"><span class="a s" style="left:3px;top:3px;line-height:12px"></span></div>
<div class="a" style="left:7.0px;top:151.0px;width:537px;height:100px;background:#fff;border:1px solid #828282"></div>
<div class="a" style="left:9.0px;top:154.0px;width:517px;height:79px;background:#fff;overflow:hidden">
<div class="a s" style="left:0px;top:0;width:61px;height:22px;border-right:1px solid #b8b8b8;border-left:1px solid #fff;line-height:25px;text-align:center"><i>参数名</i></div>
<div class="a" style="left:60px;top:22px;width:1px;height:60px;background:#c8c8c8"></div>
<div class="a s" style="left:61px;top:0;width:49px;height:22px;border-right:1px solid #b8b8b8;border-left:1px solid #fff;line-height:25px;text-align:center"><i>缺省</i></div>
<div class="a" style="left:109px;top:22px;width:1px;height:60px;background:#c8c8c8"></div>
<div class="a s" style="left:110px;top:0;width:48px;height:22px;border-right:1px solid #b8b8b8;border-left:1px solid #fff;line-height:25px;text-align:center"><i>最小</i></div>
<div class="a" style="left:157px;top:22px;width:1px;height:60px;background:#c8c8c8"></div>
<div class="a s" style="left:158px;top:0;width:51px;height:22px;border-right:1px solid #b8b8b8;border-left:1px solid #fff;line-height:25px;text-align:center"><i>最大</i></div>
<div class="a" style="left:208px;top:22px;width:1px;height:60px;background:#c8c8c8"></div>
<div class="a s" style="left:209px;top:0;width:48px;height:22px;border-right:1px solid #b8b8b8;border-left:1px solid #fff;line-height:25px;text-align:center"><i>步长</i></div>
<div class="a" style="left:256px;top:22px;width:1px;height:60px;background:#c8c8c8"></div>
<div class="a" style="left:0;top:22px;width:517px;height:1px;background:#c0c0c0"></div>
<div class="a" style="left:0;top:40px;width:517px;height:1px;background:#c0c0c0"></div>
<div class="a" style="left:0;top:58px;width:517px;height:1px;background:#c0c0c0"></div>
<div class="a" style="left:0;top:76px;width:517px;height:1px;background:#c0c0c0"></div>
</div>
<div class="a" style="left:526.0px;top:153.0px;width:17px;height:80px;background:#f0f0f0"></div>
<div class="a" style="left:527.0px;top:170.0px;width:15px;height:16px;background:#cdcdcd"></div>
<svg class="a" style="left:526.0px;top:153.0px" width="17" height="80" fill="none" stroke="#555" stroke-width="1.500"><path d="M4.500 11l4-4 4 4M4.500 69l4 4 4-4"/></svg>
<div class="a" style="left:8.0px;top:233.0px;width:535px;height:17px;background:#f0f0f0"></div>
<svg class="a" style="left:8.0px;top:233.0px" width="535" height="17" fill="none" stroke="#c0c0c0" stroke-width="1.500"><path d="M12 4.500l-4 4 4 4M506 4.500l4 4-4 4"/></svg>
<div class="a" style="left:8.0px;top:256.0px;width:857px;height:518px;background:#fff;border:1px solid #828282"></div>
<div class="a" style="left:10.0px;top:257.5px;width:20px;height:498px;background:#e4e4e4"></div>
<div class="a" id="code" style="left:10.0px;top:257.0px;width:839px;height:500px;overflow:hidden">
<div class="a m" style="left:0;top:-0.5px;height:16px;line-height:16px"><span class="a" style="left:47px;top:0"><span style="color:#000"><i>日</i>EMA5:(2*</span><span style="color:#0000ff">C</span><span style="color:#000">+4*REF<i>日</i>EMA5)/6,</span><span style="color:#0000ff">COLORWHITE</span><span style="color:#000">,</span><span style="color:#0000ff">LINETHICK2</span><span style="color:#000">;</span></span></div>
<div class="a m" style="left:0;top:14.5px;height:16px;line-height:16px"><span class="a" style="left:1px;top:0;color:#008080">25</span><span class="a" style="left:47px;top:0"><span style="color:#000">REF<i>日</i>EMA26:=</span><span style="color:#0000ff">STKINDI</span><span style="color:#000">(</span><span style="color:#0000ff">STKLABEL</span><span style="color:#000">,</span><span style="color:#ff00ff">'MYMA.EMA(26)'</span><span style="color:#000">,0,6,-1),</span><span style="color:#0000ff">NODRAW</span><span style="color:#000">;</span></span></div>
<div class="a m" style="left:0;top:29.5px;height:16px;line-height:16px"><span class="a" style="left:47px;top:0"><span style="color:#000"><i>日</i>EMA26:(2*</span><span style="color:#0000ff">C</span><span style="color:#000">+25*REF<i>日</i>EMA26)/27,COLORFF7C00,</span><span style="color:#0000ff">LINETHICK2</span><span style="color:#000">;</span></span></div>
<div class="a m" style="left:0;top:44.5px;height:16px;line-height:16px"><span class="a" style="left:47px;top:0"><span style="color:#008000">//<i>日</i>KMA26:STKINDI(STKLABEL,'MYMA.KMA(26)',0,6,0),COLORFF7C00,LINETHICK2;</span></span></div>
<div class="a m" style="left:0;top:59.5px;height:16px;line-height:16px"><span class="a" style="left:47px;top:0"><span style="color:#000"><i>秒数</i>:=</span><span style="color:#0000ff">TIMETOT0</span><span style="color:#000">(</span><span style="color:#0000ff">DYNAINFO</span><span style="color:#000">(207));</span></span></div>
<div class="a m" style="left:0;top:74.5px;height:16px;line-height:16px"><span class="a" style="left:47px;top:0"><span style="color:#000"><i>秒时</i>:=</span><span style="color:#0000ff">TOTOTIME</span><span style="color:#000">(<i>秒数</i>);</span></span></div>
<div class="a m" style="left:0;top:89.5px;height:16px;line-height:16px"><span class="a" style="left:1px;top:0;color:#008080">30</span><span class="a" style="left:47px;top:0"><span style="color:#008000">//DDATE:DATE;</span></span></div>
<div class="a m" style="left:0;top:104.5px;height:16px;line-height:16px"><span class="a" style="left:47px;top:0"><span style="color:#008000">//CDATE:CURRENTDATE;</span></span></div>
<div class="a m" style="left:0;top:119.5px;height:16px;line-height:16px"><span class="a" style="left:47px;top:0"><span style="color:#000"><i>前</i>B:=</span><span style="color:#0000ff">REFDATE</span><span style="color:#000">(</span><span style="color:#0000ff">barpos</span><span style="color:#000">,</span><span style="color:#0000ff">date</span><span style="color:#000">-1 ,<i>秒时</i> );</span></span></div>
<div class="a m" style="left:0;top:134.5px;height:16px;line-height:16px"><span class="a" style="left:47px;top:0"><span style="color:#000"><i>日</i>:</span><span style="color:#0000ff">date</span><span style="color:#000">,</span><span style="color:#0000ff">NODRAW</span><span style="color:#000">;</span></span></div>
<div class="a m" style="left:0;top:149.5px;height:16px;line-height:16px"><span class="a" style="left:47px;top:0"><span style="color:#000"><i>时</i>:</span><span style="color:#0000ff">TIME</span><span style="color:#000">,</span><span style="color:#0000ff">NODRAW</span><span style="color:#000">;</span></span></div>
<div class="a m" style="left:0;top:164.5px;height:16px;line-height:16px"><span class="a" style="left:1px;top:0;color:#008080">35</span><span class="a" style="left:47px;top:0"></span></div>
<div class="a m" style="left:0;top:179.5px;height:16px;line-height:16px"><span class="a" style="left:47px;top:0"><span style="color:#0000ff">EXTGBDATASET</span><span style="color:#000">(</span><span style="color:#ff00ff">'RIQI'</span><span style="color:#000">,</span><span style="color:#0000ff">DATE</span><span style="color:#000">-2);</span></span></div>
<div class="a m" style="left:0;top:194.5px;height:16px;line-height:16px"><span class="a" style="left:47px;top:0"><span style="color:#000">QURIQI:</span><span style="color:#0000ff">EXTGBDATA</span><span style="color:#000">(</span><span style="color:#ff00ff">'RIQI'</span><span style="color:#000">)+19000000;</span></span></div>
<div class="a m" style="left:0;top:209.5px;height:16px;line-height:16px"><span class="a" style="left:47px;top:0"><span style="color:#0000ff">MSGOUT</span><span style="color:#000">(1,</span><span style="color:#ff00ff">'QURIQI= '</span><span style="color:#000">&amp;</span><span style="color:#0000ff">NUMTOSTR</span><span style="color:#000">(QURIQI,0));</span></span></div>
<div class="a m" style="left:0;top:224.5px;height:16px;line-height:16px"><span class="a" style="left:47px;top:0"><span style="color:#0000ff">EXTGBDATASET</span><span style="color:#000;font-weight:bold">(</span><span style="color:#ff00ff">'SHIJIAN'</span><span style="color:#000">,132912</span><span style="color:#000;font-weight:bold">)</span><span style="color:#000">;</span></span></div>
<div class="a m" style="left:0;top:239.5px;height:16px;line-height:16px"><span class="a" style="left:1px;top:0;color:#008080">40</span><span class="a" style="left:47px;top:0"><span style="color:#000">QUSJ:</span><span style="color:#0000ff">EXTGBDATA</span><span style="color:#000">(</span><span style="color:#ff00ff">'SHIJIAN'</span><span style="color:#000">);</span></span></div>
<div class="a m" style="left:0;top:254.5px;height:16px;line-height:16px"><span class="a" style="left:47px;top:0"><span style="color:#000">RIQI:=</span><span style="color:#0000ff">NUMTOSTR</span><span style="color:#000">(QURIQI,0);</span></span></div>
<div class="a m" style="left:0;top:269.5px;height:16px;line-height:16px"><span class="a" style="left:47px;top:0"><span style="color:#000">SHIJIAN:=</span><span style="color:#0000ff">NUMTOSTR</span><span style="color:#000">(QUSJ,0);</span></span></div>
<div class="a m" style="left:0;top:284.5px;height:16px;line-height:16px"><span class="a" style="left:47px;top:0"><span style="color:#0000ff">MSGOUT</span><span style="color:#000">(1,</span><span style="color:#ff00ff">'SHIJIAN= '</span><span style="color:#000">&amp;SHIJIAN);</span></span></div>
<div class="a m" style="left:0;top:299.5px;height:16px;line-height:16px"><span class="a" style="left:47px;top:0"><span style="color:#000">BZRIQI:=</span><span style="color:#0000ff">STRLEFT</span><span style="color:#000">(</span><span style="color:#0000ff">NUMTOSTR</span><span style="color:#000">(QURIQI,0),4)&amp;</span><span style="color:#ff00ff">'-'</span><span style="color:#000">&amp;</span><span style="color:#0000ff">STRMID</span><span style="color:#000">(</span><span style="color:#0000ff">NUMTOSTR</span><span style="color:#000">(QURIQI,0),5 ,2)&amp;</span><span style="color:#ff00ff">'-'</span><span style="color:#000">&amp;</span><span style="color:#0000ff">STRRIGHT</span><span style="color:#000">(</span><span style="color:#0000ff">NUMTOSTR</span><span style="color:#000">(QURIQI,0) ,2);</span></span></div>
<div class="a m" style="left:0;top:314.5px;height:16px;line-height:16px"><span class="a" style="left:1px;top:0;color:#008080">45</span><span class="a" style="left:47px;top:0"><span style="color:#0000ff">MSGOUT</span><span style="color:#000">(1,</span><span style="color:#ff00ff">'BZRIQI= '</span><span style="color:#000">&amp;BZRIQI);</span></span></div>
<div class="a m" style="left:0;top:329.5px;height:16px;line-height:16px"><span class="a" style="left:47px;top:0"><span style="color:#000">BZSJS:=(</span><span style="color:#0000ff">STRLEFT</span><span style="color:#000">((SHIJIAN),2));</span></span></div>
<div class="a m" style="left:0;top:344.5px;height:16px;line-height:16px"><span class="a" style="left:47px;top:0"><span style="color:#0000ff">MSGOUT</span><span style="color:#000">(1,</span><span style="color:#ff00ff">'BZSJS= '</span><span style="color:#000">&amp;BZSJS);</span></span></div>
<div class="a m" style="left:0;top:359.5px;height:16px;line-height:16px"><span class="a" style="left:47px;top:0"><span style="color:#000">BZSJF:=(</span><span style="color:#0000ff">STRMID</span><span style="color:#000">(SHIJIAN,3,2));</span></span></div>
<div class="a m" style="left:0;top:374.5px;height:16px;line-height:16px"><span class="a" style="left:47px;top:0"><span style="color:#0000ff">MSGOUT</span><span style="color:#000">(1,</span><span style="color:#ff00ff">'BZSJF= '</span><span style="color:#000">&amp;BZSJF);</span></span></div>
<div class="a m" style="left:0;top:389.5px;height:16px;line-height:16px"><span class="a" style="left:1px;top:0;color:#008080">50</span><span class="a" style="left:47px;top:0"><span style="color:#000">BZSM:=(</span><span style="color:#0000ff">STRRIGHT</span><span style="color:#000">(SHIJIAN,2));</span></span></div>
<div class="a m" style="left:0;top:404.5px;height:16px;line-height:16px"><span class="a" style="left:47px;top:0"><span style="color:#0000ff">MSGOUT</span><span style="color:#000">(1,</span><span style="color:#ff00ff">'BZSM= '</span><span style="color:#000">&amp;BZSM);</span></span></div>
<div class="a m" style="left:0;top:419.5px;height:16px;line-height:16px"><span class="a" style="left:47px;top:0"><span style="color:#000">BZSJ:=BZSJS&amp;</span><span style="color:#ff00ff">':'</span><span style="color:#000">&amp;BZSJF&amp;</span><span style="color:#ff00ff">':'</span><span style="color:#000">&amp;BZSM;</span></span></div>
<div class="a m" style="left:0;top:434.5px;height:16px;line-height:16px"><span class="a" style="left:47px;top:0"><span style="color:#0000ff">MSGOUT</span><span style="color:#000">(1,</span><span style="color:#ff00ff">'BZSJ= '</span><span style="color:#000">&amp;BZSJ);</span></span></div>
<div class="a m" style="left:0;top:449.5px;height:16px;line-height:16px"><span class="a" style="left:47px;top:0"><span style="color:#000">KXIAN:</span><span style="color:#0000ff">DATEPOS</span><span style="color:#000">(BZRIQI&amp;</span><span style="color:#ff00ff">' '</span><span style="color:#000">&amp;BZSJ);</span></span></div>
<div class="a m" style="left:0;top:464.5px;height:16px;line-height:16px"><span class="a" style="left:1px;top:0;color:#008080">55</span><span class="a" style="left:47px;top:0"><span style="color:#000">KXIANT:</span><span style="color:#0000ff">DATEPOS</span><span style="color:#000">(</span><span style="color:#ff00ff">'2020-12-29 13:44:12'</span><span style="color:#000">);</span></span></div>
</div>
<div class="a" style="left:849.0px;top:257.0px;width:15px;height:500px;background:#f0f0f0"></div>
<div class="a" style="left:849.0px;top:465.0px;width:15px;height:273px;background:#cdcdcd"></div>
<svg class="a" style="left:849.0px;top:257.0px" width="15" height="500" fill="none" stroke="#444" stroke-width="1.600"><path d="M3.500 11l4-4 4 4M3.500 490l4 4 4-4"/></svg>
<div class="a" style="left:9.0px;top:758.0px;width:856px;height:16px;background:#f0f0f0"></div>
<div class="a" style="left:26.0px;top:758.0px;width:23px;height:16px;background:#cdcdcd"></div>
<svg class="a" style="left:9.0px;top:758.0px" width="856" height="17" fill="none" stroke="#444" stroke-width="1.600"><path d="M10.500 3.500l-4 4 4 4M828 3.500l4 4-4 4"/></svg>
<div class="a s" style="left:13.0px;top:783.0px;line-height:14px;color:#0066cc;text-decoration:underline"><i>公式系统常见问题汇总</i></div>
<div class="a s" style="left:159.0px;top:783.0px;line-height:14px;color:#0066cc;text-decoration:underline"><i>需要帮助</i>?<i>请点我</i></div>
<div class="a s" style="left:306.0px;top:783.0px;line-height:14px;color:#0066cc;text-decoration:underline"><i>公式模型编写调试教程</i></div>
<div class="a s" style="left:454.0px;top:783.0px;line-height:14px;color:#0066cc;text-decoration:underline"><i>提高编写效率的注意事项</i></div>
</div>
<div class="a" style="left:396px;top:82px;width:15px;height:675px;background:#3c3c3c"></div>
<div class="a" style="left:397px;top:96px;width:13px;height:640px;background:#444;border-left:1px solid #555"></div>
<svg class="a" style="left:396px;top:82px" width="15" height="700"><path d="M2 11l5.500-7 5.500 7z" fill="#1a1a1a"/><path d="M4 341h7M4 344h7M4 347h7" stroke="#999"/><path d="M2 681l5.500 7 5.500-7z" fill="#1a1a1a"/><rect x="0" y="664" width="15" height="12" fill="#555"/></svg>
<div class="a" style="left:15px;top:757px;width:397px;height:20px;background:#000;border-bottom:1px solid #d00000;overflow:hidden">
<svg class="a" style="left:0;top:0" width="397" height="20">
<rect x="2" y="1" width="13" height="17" fill="#333"/><rect x="16" y="1" width="13" height="17" fill="#333"/><path d="M11 4.500v10l-6-5zM20 4.500v10l6-5z" fill="#111"/>
<path d="M30.0 1H100.0Q106.0 9 101.0 18H36.0z" fill="#dcdcdc"/>
<path d="M105.0 1H165.0Q171.0 9 166.0 18H111.0z" fill="#dcdcdc"/>
<path d="M170.0 1H227.0Q233.0 9 228.0 18H176.0z" fill="#dcdcdc"/>
<path d="M296.0 1H382.0Q388.0 9 383.0 18H302.0z" fill="#dcdcdc"/>
<path d="M231.5 1H291.0Q297.0 9 292.0 18H237.5z" fill="#a00000"/>
</svg>
<div class="a tt" style="left:41.0px;top:1px;color:#000"><b class="tr">▲</b><i>上海期货</i></div>
<div class="a tt" style="left:111.0px;top:1px;color:#000"><b class="tr">▲</b><i>上海</i>A<i>股</i></div>
<div class="a tt" style="left:176.0px;top:1px;color:#000"><b class="tr">▲</b>CME<i>金属</i></div>
<div class="a tt" style="left:241.0px;top:1px;color:#30e8ff"><b class="tr">▲</b><i>自选股</i></div>
<div class="a tt" style="left:300.5px;top:1px;color:#000"><b class="tr">▲</b><i>主力合约板块</i></div>
<div class="a" style="left:381px;top:0;width:16px;height:20px;background:#000"></div><svg class="a" style="left:382px;top:0" width="15" height="20"><rect x="0" y="0" width="14" height="19" fill="#333"/><path d="M2 7h10l-5 7z" fill="#111"/></svg>
</div>
<div class="a" style="left:15px;top:778px;width:397px;height:8px;overflow:hidden;background:#000">
<div class="a" style="left:42px;top:1px;width:318px;height:20px;border:1px solid #d00000"></div>
<div class="a" style="left:97px;top:1px;width:1px;height:20px;background:#d00000"></div>
<div class="a" style="left:112px;top:1px;width:1px;height:20px;background:#d00000"></div>
<div class="a" style="left:127px;top:1px;width:1px;height:20px;background:#d00000"></div>
<div class="a" style="left:242px;top:1px;width:1px;height:20px;background:#d00000"></div>
<div class="a" style="left:322px;top:1px;width:1px;height:20px;background:#d00000"></div>
<div class="a" style="left:342px;top:1px;width:1px;height:20px;background:#d00000"></div>
<div class="a" style="left:157px;top:2px;width:28px;height:20px;background:#0000a0"></div><div class="a" style="left:187px;top:2px;width:28px;height:20px;background:#0000a0"></div>
<div class="a h" style="left:44px;top:1px;color:#fff"><i>豆粕</i>2105</div>
<div class="a h" style="left:129px;top:1px;color:#fff"><i>简况</i></div>
<div class="a h" style="left:158px;top:1px;color:#fff"><i>行情</i></div>
<div class="a h" style="left:188px;top:1px;color:#fff"><i>均价</i></div>
<div class="a h" style="left:217px;top:1px;color:#fff"><i>风价</i></div>
</div>
<div class="a h" style="left:27.0px;top:794.5px;color:#ff0000;">3480</div>
<div class="a h" style="left:27.0px;top:824.0px;color:#ff0000;">3433</div>
<div class="a h" style="left:27.0px;top:855.0px;color:#ff0000;">3385</div>
<div class="a h" style="left:27.0px;top:885.5px;color:#c8c8c8;">3338</div>
<div class="a h" style="left:27.0px;top:915.5px;color:#00f000;">3291</div>
<div class="a h" style="left:27.0px;top:946.5px;color:#00f000;">3243</div>
<div class="a h" style="left:27.0px;top:977.5px;color:#00f000;">3196</div>
<div class="a" style="left:50px;top:783px;width:392px;height:230px;background:#fff;border-right:1px solid #999">
<div class="a" style="left:2px;top:2px;width:388px;height:230px;background:#000"></div>
<div class="a" style="left:6px;top:6px;width:380px;height:230px;background:#fff"></div>
<div class="a" style="left:8px;top:8px;width:376px;height:23px;background:#bfcddb"></div>
<div class="a y" style="left:9.5px;top:11px;font-size:13px;font-weight:bold;line-height:18px;color:#000">信息窗口</div>
<svg class="a" style="left:371px;top:15px" width="11" height="11"><path d="M1.500 1.500l7.500 7M9 1.500l-7.500 7" stroke="#000" stroke-width="1.700"/></svg>
<div class="a" style="left:8px;top:32px;width:376px;height:200px;background:#fff;border:1px solid #9a9a9a"></div>
<div class="a m" style="left:11.5px;top:33.6px;line-height:16px;color:#000">2021/01/01 07:14:48  BZSJF= 29</div>
<div class="a m" style="left:11.5px;top:50.6px;line-height:16px;color:#000">2021/01/01 07:14:48  BZSM= 12</div>
<div class="a m" style="left:11.5px;top:67.6px;line-height:16px;color:#000">2021/01/01 07:14:48  BZSJ= 13:29:12</div>
<div class="a m" style="left:11.5px;top:84.6px;line-height:16px;color:#000">2021/01/01 07:16:53  QURIQI= 20201229</div>
<div class="a m" style="left:11.5px;top:101.6px;line-height:16px;color:#000">2021/01/01 07:16:53  SHIJIAN= 132912</div>
<div class="a m" style="left:11.5px;top:118.6px;line-height:16px;color:#000">2021/01/01 07:16:53  BZRIQI= 2020-12-29</div>
<div class="a m" style="left:11.5px;top:135.6px;line-height:16px;color:#000">2021/01/01 07:16:53  BZSJS= 13</div>
<div class="a m" style="left:11.5px;top:152.6px;line-height:16px;color:#000">2021/01/01 07:16:53  BZSJF= 29</div>
<div class="a m" style="left:11.5px;top:169.6px;line-height:16px;color:#000">2021/01/01 07:16:53  BZSM= 12</div>
<div class="a m" style="left:11.5px;top:186.6px;line-height:16px;color:#000">2021/01/01 07:16:53  BZSJ= 13:29:12</div>
<div class="a" style="left:366px;top:33px;width:16px;height:200px;background:#f0f0f0"></div>
<div class="a" style="left:366px;top:191px;width:16px;height:16px;background:#cdcdcd"></div>
<svg class="a" style="left:366px;top:33px" width="16" height="200" fill="none" stroke="#555" stroke-width="1.700"><path d="M3.500 11l4-4 4 4M3.500 181l4 4 4-4"/></svg>
</div>
<svg class="a" style="left:0;top:0" width="1711" height="1004" viewBox="0 0 1711 1004">
<polygon points="502.6,354.0 502.4,338.0 502.2,322.1 501.9,306.1 501.6,290.2 501.3,274.2 500.9,258.3 500.6,242.3 500.3,226.4 499.9,210.4 499.6,194.5 499.2,178.6 498.9,162.6 498.5,146.7 498.1,130.7 500.6,130.6 495.0,119.8 490.1,131.0 492.5,130.9 493.2,146.8 493.8,162.8 494.4,178.7 495.1,194.6 495.7,210.6 496.4,226.5 497.0,242.5 497.7,258.4 498.4,274.3 499.0,290.3 499.7,306.2 500.4,322.1 501.2,338.1 502.0,354.0" fill="#20d0d8"/>
<polygon points="1170.3,242.0 1175.8,233.9 1181.2,225.8 1186.6,217.6 1192.1,209.5 1197.5,201.4 1202.9,193.2 1208.3,185.1 1213.7,176.9 1219.1,168.8 1224.5,160.7 1229.9,152.5 1235.3,144.4 1240.7,136.2 1246.1,128.0 1248.0,129.3 1250.0,117.5 1240.1,124.2 1242.0,125.5 1236.8,133.7 1231.7,142.0 1226.5,150.3 1221.3,158.6 1216.1,166.9 1210.9,175.2 1205.8,183.5 1200.6,191.8 1195.4,200.0 1190.3,208.3 1185.1,216.7 1180.0,225.0 1174.8,233.3 1169.7,241.6" fill="#20d0d8"/>
<polygon points="1568.3,776.0 1570.2,729.8 1571.6,683.7 1572.9,637.5 1574.2,591.3 1575.5,545.2 1576.7,499.0 1577.9,452.8 1579.2,406.6 1580.4,360.4 1581.6,314.3 1582.8,268.1 1584.0,221.9 1585.2,175.7 1586.4,129.6 1589.0,129.6 1584.0,117.5 1578.5,129.4 1581.0,129.4 1580.0,175.6 1578.9,221.8 1577.9,268.0 1576.8,314.2 1575.8,360.3 1574.8,406.5 1573.8,452.7 1572.8,498.9 1571.8,545.1 1570.8,591.2 1569.8,637.4 1568.9,683.6 1568.0,729.8 1567.7,776.0" fill="#20d0d8"/>
<polygon points="1171.0,572.3 1158.5,572.2 1146.0,572.1 1133.4,572.1 1120.9,572.0 1108.4,572.0 1095.9,571.9 1083.3,571.9 1070.8,571.9 1058.3,571.8 1045.8,571.8 1033.3,571.7 1020.7,571.7 1008.2,571.7 995.7,571.6 995.7,569.6 985.7,573.7 995.7,577.6 995.7,575.6 1008.2,575.4 1020.8,575.2 1033.3,575.0 1045.8,574.8 1058.3,574.6 1070.8,574.4 1083.4,574.2 1095.9,574.0 1108.4,573.8 1120.9,573.6 1133.4,573.4 1146.0,573.2 1158.5,572.9 1171.0,572.7" fill="#20d0d8"/>
<polygon points="1428.0,828.8 1407.9,832.4 1387.9,836.1 1367.9,839.8 1347.9,843.5 1327.9,847.2 1307.8,850.8 1287.8,854.5 1267.8,858.2 1247.8,861.9 1227.8,865.6 1207.7,869.3 1187.7,873.0 1167.7,876.7 1147.7,880.4 1147.3,878.2 1138.3,884.5 1149.0,887.0 1148.5,884.8 1168.5,880.9 1188.5,876.9 1208.4,872.9 1228.4,869.0 1248.4,865.0 1268.3,861.1 1288.3,857.1 1308.3,853.1 1328.2,849.1 1348.2,845.2 1368.2,841.2 1388.1,837.2 1408.1,833.2 1428.0,829.2" fill="#20d0d8"/>
<polygon points="647.9,819.8 624.5,830.2 601.1,840.7 577.8,851.3 554.4,861.9 531.1,872.5 507.8,883.1 484.5,893.8 461.2,904.4 437.9,915.0 414.5,925.7 391.2,936.3 367.9,947.0 344.6,957.6 321.3,968.3 320.2,965.8 312.3,975.0 324.4,974.9 323.3,972.5 346.5,961.7 369.7,950.8 392.9,940.0 416.2,929.2 439.4,918.3 462.6,907.5 485.8,896.6 509.0,885.8 532.2,874.9 555.4,864.0 578.6,853.2 601.8,842.3 625.0,831.3 648.1,820.2" fill="#f020f0"/>
<polygon points="770.2,830.2 823.2,780.5 875.8,730.3 928.3,680.0 980.8,629.7 1033.3,579.4 1085.7,529.1 1138.2,478.8 1190.7,428.5 1243.1,378.1 1295.6,327.8 1348.0,277.5 1400.5,227.2 1452.9,176.8 1505.4,126.5 1507.3,128.5 1512.5,116.6 1500.4,121.3 1502.3,123.3 1449.9,173.7 1397.5,224.1 1345.2,274.5 1292.8,324.9 1240.4,375.3 1188.0,425.7 1135.6,476.1 1083.3,526.5 1030.9,577.0 978.6,627.4 926.2,677.8 873.9,728.3 821.6,778.8 769.8,829.8" fill="#f020f0"/>
</svg>
<div class="a y" style="left:582.0px;top:252.5px;font-size:24.0px;line-height:31px;color:#f020f0;white-space:pre;">限制k线数量<span style="letter-spacing:2px;margin-left:2px">=69</span></div>
<div class="a y" style="left:1148.0px;top:131.0px;font-size:16.4px;line-height:21px;color:#f020f0;white-space:pre;">第10根K线结束时间:133000</div>
<div class="a y" style="left:534.0px;top:770.0px;font-size:21.1px;line-height:27px;color:#8fc01f;white-space:pre;">这个对应时间13:29:12,应该在</div>
<div class="a y" style="left:534.0px;top:799.5px;font-size:21.1px;line-height:27px;color:#8fc01f;white-space:pre;">第10根K线内啊,怎么会是9呢</div>
<div class="a y" style="left:1269.0px;top:788.5px;font-size:19.4px;line-height:25px;color:#f020f0;white-space:pre;">这个时间13:44:12超过的133000,怎么还是10</div>
<div class="a y" style="left:1502.0px;top:812.5px;font-size:19.6px;line-height:25px;color:#f020f0;white-space:pre;">应该是11啊</div>
</div></body></html>
